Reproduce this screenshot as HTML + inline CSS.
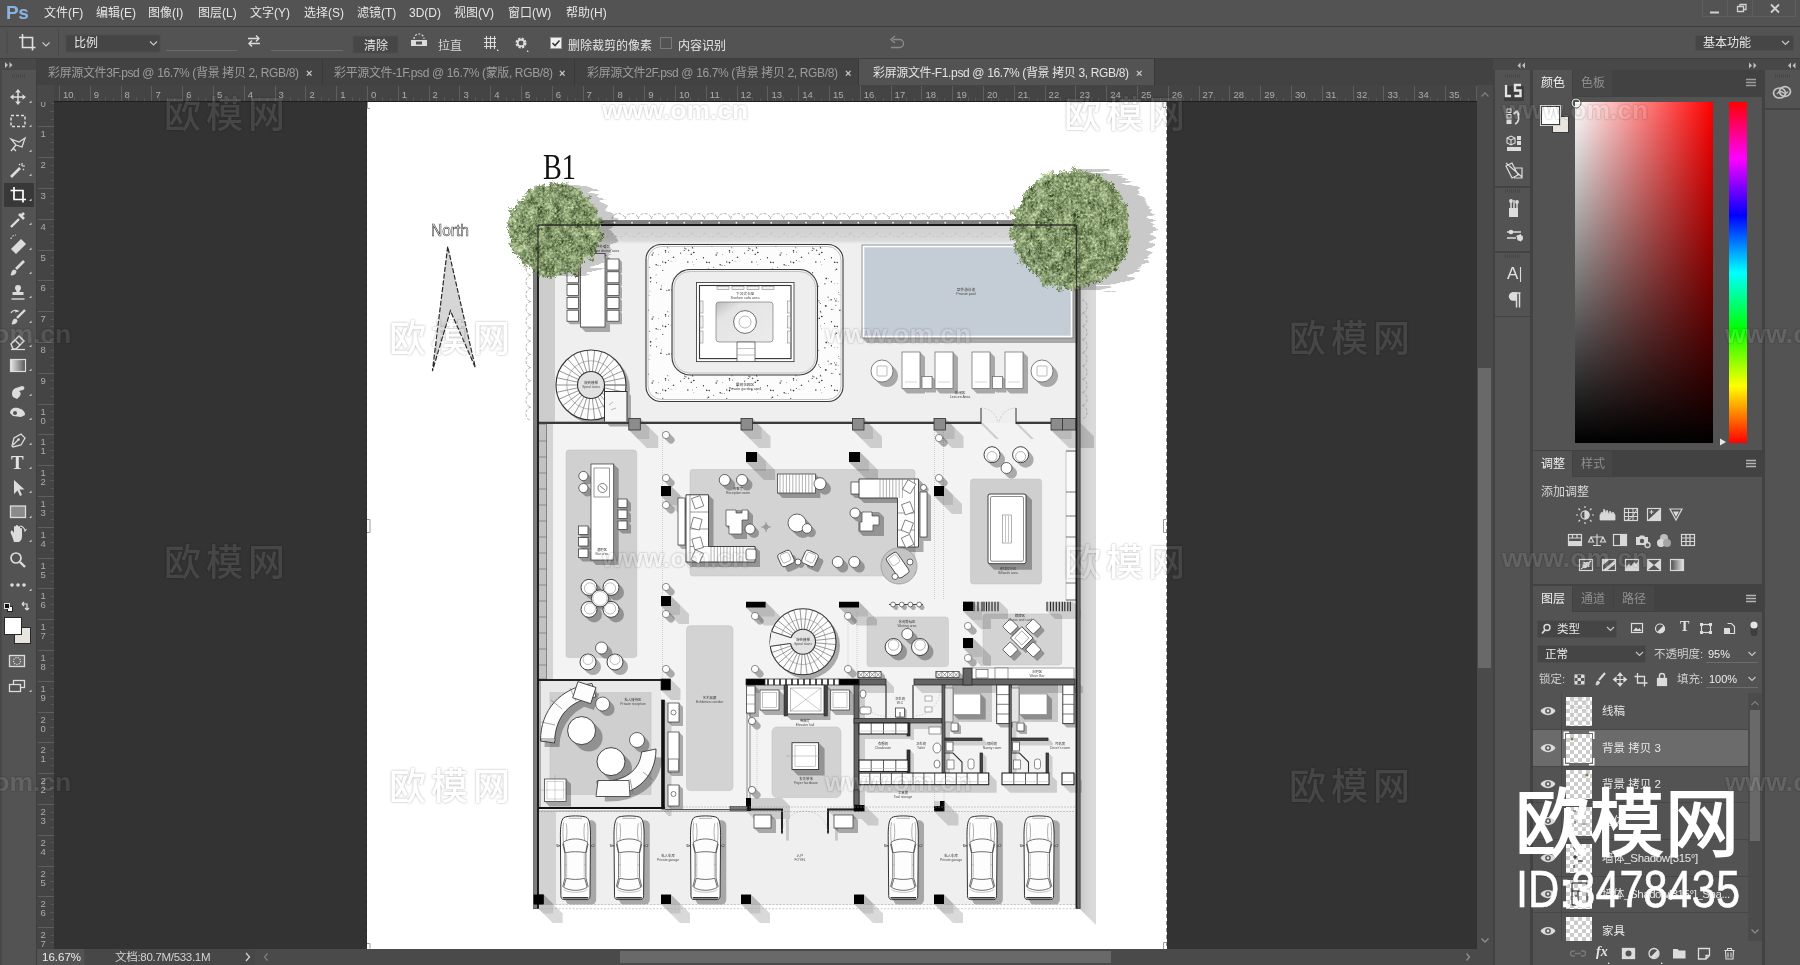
<!DOCTYPE html>
<html lang="zh-CN">
<head>
<meta charset="utf-8">
<title>Photoshop</title>
<style>
html,body{margin:0;padding:0;}
body{width:1800px;height:965px;overflow:hidden;background:#535353;position:relative;
 font-family:"Liberation Sans","Noto Sans CJK SC",sans-serif;font-size:12px;color:#dddddd;}
.a{position:absolute;}
.t{position:absolute;white-space:nowrap;line-height:16px;height:16px;}
svg{position:absolute;overflow:visible;}
.m{top:5px;font-size:12px;color:#e6e6e6;}
.tab{top:65px;font-size:12px;color:#9d9d9d;letter-spacing:-0.36px;}
.x{top:65px;font-size:11px;color:#c8c8c8;font-weight:bold;}
.dim{color:#8f8f8f;}
.wmk{font-weight:500;line-height:50px;height:50px;color:#fff;filter:url(#wmf);}
</style>
</head>
<body>
<div id="root" style="position:absolute;left:0;top:0;width:1800px;height:965px;will-change:transform">
<svg width="0" height="0" style="left:0;top:0"><defs><filter id="wmf" x="-5%" y="-20%" width="110%" height="140%" color-interpolation-filters="sRGB"><feGaussianBlur in="SourceAlpha" stdDeviation="1.300" result="b"/><feComposite in="b" in2="SourceAlpha" operator="out" result="halo"/><feColorMatrix in="halo" type="matrix" values="0 0 0 0 0  0 0 0 0 0  0 0 0 0 0  0 0 0 0.300 0" result="h2"/><feFlood flood-color="#ffffff" flood-opacity="0.095" result="fl"/><feComposite in="fl" in2="SourceAlpha" operator="in" result="f"/><feMerge><feMergeNode in="h2"/><feMergeNode in="f"/></feMerge></filter></defs></svg>
<div class="a" style="left:0;top:0;width:1800px;height:26px;background:#535353"></div>
<div class="a" style="left:0;top:26px;width:1800px;height:1px;background:#3f3f3f"></div>
<div class="a" style="left:0;top:27px;width:1800px;height:31px;background:#535353"></div>
<div class="t" style="left:6px;top:2px;font-size:19px;font-weight:bold;color:#8ab4e0;line-height:22px;height:22px;letter-spacing:-0.5px">Ps</div>
<div class="t m" style="left:44px">文件(F)</div>
<div class="t m" style="left:96px">编辑(E)</div>
<div class="t m" style="left:148px">图像(I)</div>
<div class="t m" style="left:198px">图层(L)</div>
<div class="t m" style="left:250px">文字(Y)</div>
<div class="t m" style="left:304px">选择(S)</div>
<div class="t m" style="left:357px">滤镜(T)</div>
<div class="t m" style="left:409px">3D(D)</div>
<div class="t m" style="left:454px">视图(V)</div>
<div class="t m" style="left:508px">窗口(W)</div>
<div class="t m" style="left:566px">帮助(H)</div>
<!-- window buttons -->
<div class="a" style="left:1702px;top:-1px;width:94px;height:18px;border:1px solid #5f5f5f;box-sizing:border-box"></div><div class="a" style="left:1727px;top:0;width:1px;height:16px;background:#5f5f5f"></div><div class="a" style="left:1752px;top:0;width:1px;height:16px;background:#5f5f5f"></div>
<svg style="left:1702px;top:0" width="95" height="17"><path d="M8 12.5h9" stroke="#d0d0d0" stroke-width="2" fill="none"/><path d="M35.5 6.5h6v5h-6z M38 6V4.5h6v5h-2" stroke="#d0d0d0" stroke-width="1.3" fill="none"/><path d="M69 4.5l8 8M77 4.5l-8 8" stroke="#d0d0d0" stroke-width="1.8" fill="none"/></svg>
<!-- options bar -->
<svg style="left:0;top:27px" width="900" height="31">
 <path d="M7 4v23" stroke="#484848" stroke-width="1"/>
 <path d="M22.5 7v13.5h13 M19 10.5h13.5v13" stroke="#e0e0e0" stroke-width="1.6" fill="none"/>
 <path d="M42.5 15.5l3.5 3.5 3.5-3.5" stroke="#c8c8c8" stroke-width="1.2" fill="none"/>
 <path d="M58.5 3v25" stroke="#474747" stroke-width="1"/>
 <rect x="66" y="8" width="94" height="17" fill="#454545" stroke="#4e4e4e" stroke-width="1"/>
 <path d="M150 14.5l3.5 3.5 3.5-3.5" stroke="#c8c8c8" stroke-width="1.2" fill="none"/>
 <path d="M166 23.5h71 M271 23.5h72" stroke="#6a6a6a" stroke-width="1"/>
 <path d="M248 12.5h11m-3-3l3 3-3 3 M260 17.5h-11m3-3l-3 3 3 3" stroke="#dcdcdc" stroke-width="1.4" fill="none" transform="translate(0,-1)"/>
 <rect x="353" y="9" width="45" height="17" fill="#464646" stroke="#4e4e4e"/>
 <path d="M411 13h16v6h-16z" fill="#dcdcdc"/><path d="M414 12a5 5 0 0 1 10 0" stroke="#dcdcdc" stroke-width="1.2" fill="none" stroke-dasharray="2 1.5"/><rect x="416" y="14.5" width="6" height="3" fill="#535353"/>
 <path d="M484 11.5h12M484 15.5h12M484 19.5h12M486.5 9v13M490.5 9v13M494.5 9v13" stroke="#dcdcdc" stroke-width="1.1" fill="none"/>
 <path d="M497 22l2 2-2 0z" fill="#dcdcdc"/>
 <circle cx="521" cy="16" r="4" fill="none" stroke="#dcdcdc" stroke-width="3" stroke-dasharray="2.1 1.05"/><circle cx="521" cy="16" r="3.3" fill="none" stroke="#dcdcdc" stroke-width="1.6"/>
 <path d="M527 23l2 2-2 0z" fill="#dcdcdc"/>
 <rect x="550.5" y="10.500" width="11" height="11" fill="#f0f0f0" stroke="#9a9a9a"/><path d="M552.500 16l2.500 2.500 4.500-5" stroke="#333" stroke-width="1.6" fill="none"/>
 <rect x="660.500" y="10.500" width="11" height="11" fill="none" stroke="#7a7a7a"/>
 <path d="M893 12.500h6.500a4 4 0 0 1 0 8h-8.500" stroke="#8a8a8a" stroke-width="1.400" fill="none"/><path d="M895 9l-4 3.500 4 3.500" stroke="#8a8a8a" stroke-width="1.400" fill="none"/>
</svg>
<div class="t" style="left:74px;top:35px;color:#e6e6e6">比例</div>
<div class="t" style="left:364px;top:38px;color:#e6e6e6">清除</div>
<div class="t" style="left:438px;top:38px;color:#d6d6d6">拉直</div>
<div class="t" style="left:568px;top:38px;color:#e6e6e6">删除裁剪的像素</div>
<div class="t" style="left:678px;top:38px;color:#e6e6e6">内容识别</div>
<div class="a" style="left:1695px;top:35px;width:99px;height:16px;background:#464646;border:1px solid #4e4e4e;box-sizing:border-box"></div>
<div class="t" style="left:1703px;top:35px;color:#e6e6e6">基本功能</div>
<svg style="left:1780px;top:38px" width="12" height="10"><path d="M2 3l3.500 3.500 3.500-3.500" stroke="#c8c8c8" stroke-width="1.200" fill="none"/></svg>
<!-- tab bar -->
<div class="a" style="left:0;top:58px;width:1800px;height:1px;background:#3f3f3f"></div>
<div class="a" style="left:0;top:59px;width:37px;height:11px;background:#484848"></div>
<svg style="left:4px;top:61px" width="12" height="8"><path d="M1 1l3 3-3 3zM5.500 1l3 3-3 3z" fill="#c0c0c0"/></svg>
<div class="a" style="left:37px;top:59px;width:1456px;height:26px;background:#424242"></div>
<div class="a" style="left:859px;top:59px;width:295px;height:26px;background:#535353"></div>
<div class="a" style="left:322px;top:59px;width:1px;height:26px;background:#393939"></div>
<div class="a" style="left:574px;top:59px;width:1px;height:26px;background:#393939"></div>
<div class="a" style="left:858px;top:59px;width:1px;height:26px;background:#393939"></div>
<div class="a" style="left:1154px;top:59px;width:1px;height:26px;background:#393939"></div>
<div class="t tab" style="left:48px">彩屏源文件3F.psd @ 16.7% (背景 拷贝 2, RGB/8)</div><div class="t x" style="left:306px">×</div>
<div class="t tab" style="left:334px">彩平源文件-1F.psd @ 16.7% (蒙版, RGB/8)</div><div class="t x" style="left:559px">×</div>
<div class="t tab" style="left:587px">彩屏源文件2F.psd @ 16.7% (背景 拷贝 2, RGB/8)</div><div class="t x" style="left:845px">×</div>
<div class="t tab" style="left:873px;color:#e4e4e4">彩屏源文件-F1.psd @ 16.7% (背景 拷贝 3, RGB/8)</div><div class="t x" style="left:1136px">×</div>

<svg class="a" style="left:37px;top:85px;overflow:hidden" width="1440" height="17" viewBox="37 85 1440 17">
<rect x="37" y="85" width="1440" height="17" fill="#444444"/>
<rect x="37" y="85" width="17" height="17" fill="#484848"/>
<path d="M59.5 86V101M90.5 86V101M121.5 86V101M151.5 86V101M182.5 86V101M213.5 86V101M244.5 86V101M275.5 86V101M305.5 86V101M336.5 86V101M367.5 86V101M398.5 86V101M429.5 86V101M459.5 86V101M490.5 86V101M521.5 86V101M552.5 86V101M583.5 86V101M613.5 86V101M644.5 86V101M675.5 86V101M706.5 86V101M737.5 86V101M767.5 86V101M798.5 86V101M829.5 86V101M860.5 86V101M891.5 86V101M921.5 86V101M952.5 86V101M983.5 86V101M1014.5 86V101M1045.5 86V101M1075.5 86V101M1106.5 86V101M1137.5 86V101M1168.5 86V101M1199.5 86V101M1229.5 86V101M1260.5 86V101M1291.5 86V101M1322.5 86V101M1353.5 86V101M1383.5 86V101M1414.5 86V101M1445.5 86V101M1476.5 86V101" stroke="#5e5e5e" stroke-width="1" fill="none"/>
<path d="M67.5 98V101M74.5 97V101M82.5 98V101M98.5 98V101M105.5 97V101M113.5 98V101M128.5 98V101M136.5 97V101M144.5 98V101M159.5 98V101M167.5 97V101M174.5 98V101M190.5 98V101M198.5 97V101M205.5 98V101M221.5 98V101M228.5 97V101M236.5 98V101M252.5 98V101M259.5 97V101M267.5 98V101M282.5 98V101M290.5 97V101M298.5 98V101M313.5 98V101M321.5 97V101M328.5 98V101M344.5 98V101M352.5 97V101M359.5 98V101M375.5 98V101M382.5 97V101M390.5 98V101M406.5 98V101M413.5 97V101M421.5 98V101M436.5 98V101M444.5 97V101M452.5 98V101M467.5 98V101M475.5 97V101M482.5 98V101M498.5 98V101M506.5 97V101M513.5 98V101M529.5 98V101M536.5 97V101M544.5 98V101M560.5 98V101M567.5 97V101M575.5 98V101M590.5 98V101M598.5 97V101M606.5 98V101M621.5 98V101M629.5 97V101M636.5 98V101M652.5 98V101M660.5 97V101M667.5 98V101M683.5 98V101M690.5 97V101M698.5 98V101M714.5 98V101M721.5 97V101M729.5 98V101M744.5 98V101M752.5 97V101M760.5 98V101M775.5 98V101M783.5 97V101M791.5 98V101M806.5 98V101M814.5 97V101M821.5 98V101M837.5 98V101M844.5 97V101M852.5 98V101M868.5 98V101M875.5 97V101M883.5 98V101M898.5 98V101M906.5 97V101M914.5 98V101M929.5 98V101M937.5 97V101M944.5 98V101M960.5 98V101M968.5 97V101M975.5 98V101M991.5 98V101M998.5 97V101M1006.5 98V101M1022.5 98V101M1029.5 97V101M1037.5 98V101M1052.5 98V101M1060.5 97V101M1068.5 98V101M1083.5 98V101M1091.5 97V101M1098.5 98V101M1114.5 98V101M1122.5 97V101M1129.5 98V101M1145.5 98V101M1152.5 97V101M1160.5 98V101M1176.5 98V101M1183.5 97V101M1191.5 98V101M1206.5 98V101M1214.5 97V101M1222.5 98V101M1237.5 98V101M1245.5 97V101M1252.5 98V101M1268.5 98V101M1276.5 97V101M1283.5 98V101M1299.5 98V101M1306.5 97V101M1314.5 98V101M1330.5 98V101M1337.5 97V101M1345.5 98V101M1360.5 98V101M1368.5 97V101M1376.5 98V101M1391.5 98V101M1399.5 97V101M1406.5 98V101M1422.5 98V101M1430.5 97V101M1437.5 98V101M1453.5 98V101M1460.5 97V101M1468.5 98V101" stroke="#565656" stroke-width="1" fill="none"/>
<text x="63.0" y="98" font-size="9.5" fill="#adadad" font-family="Liberation Sans, sans-serif">10</text>
<text x="93.8" y="98" font-size="9.5" fill="#adadad" font-family="Liberation Sans, sans-serif">9</text>
<text x="124.6" y="98" font-size="9.5" fill="#adadad" font-family="Liberation Sans, sans-serif">8</text>
<text x="155.4" y="98" font-size="9.5" fill="#adadad" font-family="Liberation Sans, sans-serif">7</text>
<text x="186.2" y="98" font-size="9.5" fill="#adadad" font-family="Liberation Sans, sans-serif">6</text>
<text x="217.0" y="98" font-size="9.5" fill="#adadad" font-family="Liberation Sans, sans-serif">5</text>
<text x="247.8" y="98" font-size="9.5" fill="#adadad" font-family="Liberation Sans, sans-serif">4</text>
<text x="278.6" y="98" font-size="9.5" fill="#adadad" font-family="Liberation Sans, sans-serif">3</text>
<text x="309.4" y="98" font-size="9.5" fill="#adadad" font-family="Liberation Sans, sans-serif">2</text>
<text x="340.2" y="98" font-size="9.5" fill="#adadad" font-family="Liberation Sans, sans-serif">1</text>
<text x="371.0" y="98" font-size="9.5" fill="#adadad" font-family="Liberation Sans, sans-serif">0</text>
<text x="401.8" y="98" font-size="9.5" fill="#adadad" font-family="Liberation Sans, sans-serif">1</text>
<text x="432.6" y="98" font-size="9.5" fill="#adadad" font-family="Liberation Sans, sans-serif">2</text>
<text x="463.4" y="98" font-size="9.5" fill="#adadad" font-family="Liberation Sans, sans-serif">3</text>
<text x="494.2" y="98" font-size="9.5" fill="#adadad" font-family="Liberation Sans, sans-serif">4</text>
<text x="525.0" y="98" font-size="9.5" fill="#adadad" font-family="Liberation Sans, sans-serif">5</text>
<text x="555.8" y="98" font-size="9.5" fill="#adadad" font-family="Liberation Sans, sans-serif">6</text>
<text x="586.6" y="98" font-size="9.5" fill="#adadad" font-family="Liberation Sans, sans-serif">7</text>
<text x="617.4" y="98" font-size="9.5" fill="#adadad" font-family="Liberation Sans, sans-serif">8</text>
<text x="648.2" y="98" font-size="9.5" fill="#adadad" font-family="Liberation Sans, sans-serif">9</text>
<text x="679.0" y="98" font-size="9.5" fill="#adadad" font-family="Liberation Sans, sans-serif">10</text>
<text x="709.8" y="98" font-size="9.5" fill="#adadad" font-family="Liberation Sans, sans-serif">11</text>
<text x="740.6" y="98" font-size="9.5" fill="#adadad" font-family="Liberation Sans, sans-serif">12</text>
<text x="771.4" y="98" font-size="9.5" fill="#adadad" font-family="Liberation Sans, sans-serif">13</text>
<text x="802.2" y="98" font-size="9.5" fill="#adadad" font-family="Liberation Sans, sans-serif">14</text>
<text x="833.0" y="98" font-size="9.5" fill="#adadad" font-family="Liberation Sans, sans-serif">15</text>
<text x="863.8" y="98" font-size="9.5" fill="#adadad" font-family="Liberation Sans, sans-serif">16</text>
<text x="894.6" y="98" font-size="9.5" fill="#adadad" font-family="Liberation Sans, sans-serif">17</text>
<text x="925.4" y="98" font-size="9.5" fill="#adadad" font-family="Liberation Sans, sans-serif">18</text>
<text x="956.2" y="98" font-size="9.5" fill="#adadad" font-family="Liberation Sans, sans-serif">19</text>
<text x="987.0" y="98" font-size="9.5" fill="#adadad" font-family="Liberation Sans, sans-serif">20</text>
<text x="1017.8" y="98" font-size="9.5" fill="#adadad" font-family="Liberation Sans, sans-serif">21</text>
<text x="1048.6" y="98" font-size="9.5" fill="#adadad" font-family="Liberation Sans, sans-serif">22</text>
<text x="1079.4" y="98" font-size="9.5" fill="#adadad" font-family="Liberation Sans, sans-serif">23</text>
<text x="1110.2" y="98" font-size="9.5" fill="#adadad" font-family="Liberation Sans, sans-serif">24</text>
<text x="1141.0" y="98" font-size="9.5" fill="#adadad" font-family="Liberation Sans, sans-serif">25</text>
<text x="1171.8" y="98" font-size="9.5" fill="#adadad" font-family="Liberation Sans, sans-serif">26</text>
<text x="1202.6" y="98" font-size="9.5" fill="#adadad" font-family="Liberation Sans, sans-serif">27</text>
<text x="1233.4" y="98" font-size="9.5" fill="#adadad" font-family="Liberation Sans, sans-serif">28</text>
<text x="1264.2" y="98" font-size="9.5" fill="#adadad" font-family="Liberation Sans, sans-serif">29</text>
<text x="1295.0" y="98" font-size="9.5" fill="#adadad" font-family="Liberation Sans, sans-serif">30</text>
<text x="1325.8" y="98" font-size="9.5" fill="#adadad" font-family="Liberation Sans, sans-serif">31</text>
<text x="1356.6" y="98" font-size="9.5" fill="#adadad" font-family="Liberation Sans, sans-serif">32</text>
<text x="1387.4" y="98" font-size="9.5" fill="#adadad" font-family="Liberation Sans, sans-serif">33</text>
<text x="1418.2" y="98" font-size="9.5" fill="#adadad" font-family="Liberation Sans, sans-serif">34</text>
<text x="1449.0" y="98" font-size="9.5" fill="#adadad" font-family="Liberation Sans, sans-serif">35</text>
</svg>
<svg class="a" style="left:37px;top:102px;overflow:hidden" width="17" height="847" viewBox="37 102 17 847">
<rect x="37" y="102" width="17" height="847" fill="#444444"/>
<path d="M38 126.5H54M38 157.5H54M38 188.5H54M38 219.5H54M38 250.5H54M38 280.5H54M38 311.5H54M38 342.5H54M38 373.5H54M38 404.5H54M38 434.5H54M38 465.5H54M38 496.5H54M38 527.5H54M38 558.5H54M38 588.5H54M38 619.5H54M38 650.5H54M38 681.5H54M38 712.5H54M38 742.5H54M38 773.5H54M38 804.5H54M38 835.5H54M38 866.5H54M38 896.5H54M38 927.5H54" stroke="#5e5e5e" stroke-width="1" fill="none"/>
<path d="M51 103.5H54M50 111.5H54M51 119.5H54M51 134.5H54M50 142.5H54M51 149.5H54M51 165.5H54M50 172.5H54M51 180.5H54M51 196.5H54M50 203.5H54M51 211.5H54M51 226.5H54M50 234.5H54M51 242.5H54M51 257.5H54M50 265.5H54M51 273.5H54M51 288.5H54M50 296.5H54M51 303.5H54M51 319.5H54M50 326.5H54M51 334.5H54M51 350.5H54M50 357.5H54M51 365.5H54M51 380.5H54M50 388.5H54M51 396.5H54M51 411.5H54M50 419.5H54M51 427.5H54M51 442.5H54M50 450.5H54M51 457.5H54M51 473.5H54M50 480.5H54M51 488.5H54M51 504.5H54M50 511.5H54M51 519.5H54M51 534.5H54M50 542.5H54M51 550.5H54M51 565.5H54M50 573.5H54M51 581.5H54M51 596.5H54M50 604.5H54M51 611.5H54M51 627.5H54M50 634.5H54M51 642.5H54M51 658.5H54M50 665.5H54M51 673.5H54M51 688.5H54M50 696.5H54M51 704.5H54M51 719.5H54M50 727.5H54M51 735.5H54M51 750.5H54M50 758.5H54M51 765.5H54M51 781.5H54M50 788.5H54M51 796.5H54M51 812.5H54M50 819.5H54M51 827.5H54M51 842.5H54M50 850.5H54M51 858.5H54M51 873.5H54M50 881.5H54M51 889.5H54M51 904.5H54M50 912.5H54M51 919.5H54M51 935.5H54M50 942.5H54" stroke="#565656" stroke-width="1" fill="none"/>
<text x="40.5" y="106.5" font-size="9.5" fill="#adadad" font-family="Liberation Sans, sans-serif">0</text>
<text x="40.5" y="137.3" font-size="9.5" fill="#adadad" font-family="Liberation Sans, sans-serif">1</text>
<text x="40.5" y="168.1" font-size="9.5" fill="#adadad" font-family="Liberation Sans, sans-serif">2</text>
<text x="40.5" y="198.9" font-size="9.5" fill="#adadad" font-family="Liberation Sans, sans-serif">3</text>
<text x="40.5" y="229.7" font-size="9.5" fill="#adadad" font-family="Liberation Sans, sans-serif">4</text>
<text x="40.5" y="260.5" font-size="9.5" fill="#adadad" font-family="Liberation Sans, sans-serif">5</text>
<text x="40.5" y="291.3" font-size="9.5" fill="#adadad" font-family="Liberation Sans, sans-serif">6</text>
<text x="40.5" y="322.1" font-size="9.5" fill="#adadad" font-family="Liberation Sans, sans-serif">7</text>
<text x="40.5" y="352.9" font-size="9.5" fill="#adadad" font-family="Liberation Sans, sans-serif">8</text>
<text x="40.5" y="383.7" font-size="9.5" fill="#adadad" font-family="Liberation Sans, sans-serif">9</text>
<text x="40.5" y="414.5" font-size="9.5" fill="#adadad" font-family="Liberation Sans, sans-serif">1</text>
<text x="40.5" y="423.5" font-size="9.5" fill="#adadad" font-family="Liberation Sans, sans-serif">0</text>
<text x="40.5" y="445.3" font-size="9.5" fill="#adadad" font-family="Liberation Sans, sans-serif">1</text>
<text x="40.5" y="454.3" font-size="9.5" fill="#adadad" font-family="Liberation Sans, sans-serif">1</text>
<text x="40.5" y="476.1" font-size="9.5" fill="#adadad" font-family="Liberation Sans, sans-serif">1</text>
<text x="40.5" y="485.1" font-size="9.5" fill="#adadad" font-family="Liberation Sans, sans-serif">2</text>
<text x="40.5" y="506.9" font-size="9.5" fill="#adadad" font-family="Liberation Sans, sans-serif">1</text>
<text x="40.5" y="515.9" font-size="9.5" fill="#adadad" font-family="Liberation Sans, sans-serif">3</text>
<text x="40.5" y="537.7" font-size="9.5" fill="#adadad" font-family="Liberation Sans, sans-serif">1</text>
<text x="40.5" y="546.7" font-size="9.5" fill="#adadad" font-family="Liberation Sans, sans-serif">4</text>
<text x="40.5" y="568.5" font-size="9.5" fill="#adadad" font-family="Liberation Sans, sans-serif">1</text>
<text x="40.5" y="577.5" font-size="9.5" fill="#adadad" font-family="Liberation Sans, sans-serif">5</text>
<text x="40.5" y="599.3" font-size="9.5" fill="#adadad" font-family="Liberation Sans, sans-serif">1</text>
<text x="40.5" y="608.3" font-size="9.5" fill="#adadad" font-family="Liberation Sans, sans-serif">6</text>
<text x="40.5" y="630.1" font-size="9.5" fill="#adadad" font-family="Liberation Sans, sans-serif">1</text>
<text x="40.5" y="639.1" font-size="9.5" fill="#adadad" font-family="Liberation Sans, sans-serif">7</text>
<text x="40.5" y="660.9" font-size="9.5" fill="#adadad" font-family="Liberation Sans, sans-serif">1</text>
<text x="40.5" y="669.9" font-size="9.5" fill="#adadad" font-family="Liberation Sans, sans-serif">8</text>
<text x="40.5" y="691.7" font-size="9.5" fill="#adadad" font-family="Liberation Sans, sans-serif">1</text>
<text x="40.5" y="700.7" font-size="9.5" fill="#adadad" font-family="Liberation Sans, sans-serif">9</text>
<text x="40.5" y="722.5" font-size="9.5" fill="#adadad" font-family="Liberation Sans, sans-serif">2</text>
<text x="40.5" y="731.5" font-size="9.5" fill="#adadad" font-family="Liberation Sans, sans-serif">0</text>
<text x="40.5" y="753.3" font-size="9.5" fill="#adadad" font-family="Liberation Sans, sans-serif">2</text>
<text x="40.5" y="762.3" font-size="9.5" fill="#adadad" font-family="Liberation Sans, sans-serif">1</text>
<text x="40.5" y="784.1" font-size="9.5" fill="#adadad" font-family="Liberation Sans, sans-serif">2</text>
<text x="40.5" y="793.1" font-size="9.5" fill="#adadad" font-family="Liberation Sans, sans-serif">2</text>
<text x="40.5" y="814.9" font-size="9.5" fill="#adadad" font-family="Liberation Sans, sans-serif">2</text>
<text x="40.5" y="823.9" font-size="9.5" fill="#adadad" font-family="Liberation Sans, sans-serif">3</text>
<text x="40.5" y="845.7" font-size="9.5" fill="#adadad" font-family="Liberation Sans, sans-serif">2</text>
<text x="40.5" y="854.7" font-size="9.5" fill="#adadad" font-family="Liberation Sans, sans-serif">4</text>
<text x="40.5" y="876.5" font-size="9.5" fill="#adadad" font-family="Liberation Sans, sans-serif">2</text>
<text x="40.5" y="885.5" font-size="9.5" fill="#adadad" font-family="Liberation Sans, sans-serif">5</text>
<text x="40.5" y="907.3" font-size="9.5" fill="#adadad" font-family="Liberation Sans, sans-serif">2</text>
<text x="40.5" y="916.3" font-size="9.5" fill="#adadad" font-family="Liberation Sans, sans-serif">6</text>
<text x="40.5" y="938.1" font-size="9.5" fill="#adadad" font-family="Liberation Sans, sans-serif">2</text>
<text x="40.5" y="947.1" font-size="9.5" fill="#adadad" font-family="Liberation Sans, sans-serif">7</text>
</svg>
<div class="a" style="left:0;top:70px;width:37px;height:895px;background:#535353"></div>
<div class="a" style="left:36px;top:59px;width:1px;height:906px;background:#3f3f3f"></div>
<div class="a" style="left:0;top:59px;width:2px;height:906px;background:#484848"></div>
<div class="a" style="left:4px;top:183px;width:30px;height:24px;background:#383838"></div>
<svg style="left:0;top:70px" width="37" height="640" viewBox="0 70 37 640" fill="none" stroke="#dcdcdc" stroke-width="1.5">
 <path d="M12 76h14" stroke="#474747" stroke-width="3" stroke-dasharray="1 1"/>
 <!-- move -->
 <path d="M18 91v12M12 97h12" stroke-width="1.500"/><path d="M18 89l-2.800 3.500h5.600zM18 105l-2.800-3.500h5.600zM10 97l3.500-2.800v5.600zM26 97l-3.500-2.800v5.600z" fill="#dcdcdc" stroke="none"/>
 <!-- marquee -->
 <rect x="11" y="115.500" width="14" height="11" stroke-dasharray="3 2"/>
 <!-- lasso -->
 <path d="M11 139l8 3 6-4-3 9-6-2zM16 145l-5 6M13 148l3 3" stroke-width="1.300"/>
 <!-- wand -->
 <path d="M11 177l9-9" stroke-width="2.600"/><path d="M22 163v3M25 166h-3M23 169l1 1M19 164l1 1" stroke-width="1.200"/>
 <!-- crop -->
 <path d="M14 187v12.500h12M10.500 190.500h12.500v12" stroke="#ffffff" stroke-width="1.700"/>
 <!-- eyedropper -->
 <path d="M11 227l8-8" stroke-width="2.400"/><path d="M19 214l5 5M21 216l3-3" stroke-width="2.600"/>
 <!-- heal -->
 <path d="M12 249l9-9 4 4-9 9z" fill="#dcdcdc"/><path d="M11 239a5 5 0 0 1 5-4" stroke-dasharray="1.500 1.500" stroke-width="1.200"/>
 <!-- brush -->
 <path d="M24 261l-8 8" stroke-width="2.600"/><path d="M11 275c3 0 5-1 5-4l-2-1c-2 0-2 3-3 5z" fill="#dcdcdc" stroke-width="1"/>
 <!-- stamp -->
 <path d="M18 285a3 3 0 0 1 3 3c0 2-1.500 2-1.500 4h4v3h-11v-3h4c0-2-1.500-2-1.500-4a3 3 0 0 1 3-3z" fill="#dcdcdc" stroke="none"/><path d="M11.500 299h13" stroke-width="1.400"/>
 <!-- history brush -->
 <path d="M25 310l-8 8" stroke-width="2.400"/><path d="M12 324c3 0 5-1 5-4l-2-1c-2 0-2 3-3 5z" fill="#dcdcdc" stroke-width="1"/><path d="M11 313a5 5 0 0 1 7-2l-3 1" stroke-width="1.200"/>
 <!-- eraser -->
 <path d="M11 344l8-8 5 5-8 8h-3z" /><path d="M15 340l5 5" /><path d="M11 349.500h14" stroke-width="1.200"/>
 <!-- gradient -->
 <rect x="10.500" y="359.500" width="15" height="12" fill="url(#tg)" stroke-width="1.200"/>
 <defs><linearGradient id="tg" x1="0" x2="1"><stop offset="0" stop-color="#e8e8e8"/><stop offset="1" stop-color="#555"/></linearGradient></defs>
 <!-- smudge -->
 <path d="M13 397c-2-3-1-8 3-9l6-2c3 0 3 3 1 4l-4 1c2 1 2 3 1 5l-3 3z" fill="#dcdcdc" stroke="none"/>
 <!-- sponge/dodge -->
 <path d="M10 413c0-4 4-6 8-5s7 3 7 7l-4 2-8-1z" fill="#dcdcdc" stroke="none"/><circle cx="15" cy="413" r="2" fill="#535353" stroke="none"/>
 <!-- pen -->
 <path d="M12 446l2-8 7-4 4 4-4 7-8 2zM13 445l5-5" stroke-width="1.300"/><circle cx="18.500" cy="439.500" r="1.300" fill="#dcdcdc" stroke="none"/>
 <!-- rect shape -->
 <rect x="10.500" y="506" width="15" height="11.500" fill="#8a8a8a" stroke-width="1.300"/>
 <!-- arrow -->
 <path d="M14 480v14l3.500-3.500 2.500 5.500 2-1-2.500-5.500h5z" fill="#dcdcdc" stroke="none"/>
 <!-- hand -->
 <path d="M12 536c-1-2-2-4-1-5s2 0 3 2v-6c0-1.500 2-1.500 2 0v-1c0-1.500 2-1.500 2 0v1c0-1.500 2-1.500 2 0v2c0-1.500 2-1.500 2 0v7c0 3-1 5-3 6h-5z" fill="#dcdcdc" stroke="none"/><path d="M20 526a6 6 0 0 1 5 5l1.500-2" stroke-width="1.100"/>
 <!-- zoom -->
 <circle cx="16" cy="558" r="5" stroke-width="1.700"/><path d="M20 562l5 5" stroke-width="2.400"/>
 <!-- dots -->
 <circle cx="12" cy="585" r="1.800" fill="#dcdcdc" stroke="none"/><circle cx="18" cy="585" r="1.800" fill="#dcdcdc" stroke="none"/><circle cx="24" cy="585" r="1.800" fill="#dcdcdc" stroke="none"/>
 <!-- default colours / swap -->
 <rect x="7.500" y="606.500" width="5" height="5" fill="#ffffff" stroke="#222" stroke-width="1"/><rect x="4.500" y="603.500" width="5" height="5" fill="#111" stroke="#ddd" stroke-width="1"/>
 <path d="M22 604h5v6M22 604l2-2M22 604l2 2M27 610l-2-2M27 610l2-2" stroke-width="1.200"/>
 <!-- quick mask -->
 <rect x="9.500" y="655.500" width="15" height="11" stroke-width="1.300" fill="#6a6a6a"/><circle cx="17" cy="661" r="3.500" stroke-dasharray="1.200 1.200" stroke-width="1.200"/>
 <!-- screen mode -->
 <rect x="13.500" y="680.500" width="11" height="7" stroke-width="1.300"/><rect x="9.500" y="684.500" width="11" height="7" fill="#535353" stroke-width="1.300"/>
</svg>
<svg style="left:0;top:70px" width="37" height="640" viewBox="0 70 37 640"><path d="M29 103l2.500-2.500V103zM29 127l2.500-2.500V127zM29 152l2.500-2.500V152zM29 176l2.500-2.500V176zM29 201l2.500-2.500V201zM29 225l2.500-2.500V225zM29 250l2.500-2.500V250zM29 274l2.500-2.500V274zM29 298l2.500-2.500V298zM29 323l2.500-2.500V323zM29 347l2.500-2.500V347zM29 371l2.500-2.500V371zM29 396l2.500-2.500V396zM29 420l2.500-2.500V420zM29 445l2.500-2.500V445zM29 469l2.500-2.500V469zM29 493l2.500-2.500V493zM29 518l2.500-2.500V518zM29 542l2.500-2.500V542zM29 591l2.500-2.500V591zM29 692l2.500-2.500V692z" fill="#c8c8c8"/></svg>
<div class="t" style="left:11px;top:452px;font-family:'Liberation Serif',serif;font-weight:bold;font-size:19px;line-height:22px;height:22px;color:#e2e2e2">T</div>
<div class="a" style="left:14px;top:627px;width:17px;height:17px;background:#e8e4e0;border:1px solid #2a2a2a;box-sizing:border-box"></div>
<div class="a" style="left:4px;top:617px;width:18px;height:18px;background:#ffffff;border:1px solid #2a2a2a;box-sizing:border-box"></div>

<div class="a" style="left:54px;top:102px;width:1423px;height:847px;background:#333333"></div>
<div class="a" style="left:54px;top:101px;width:1423px;height:1px;background:#1e1e1e"></div>
<div class="a" style="left:367px;top:102px;width:799.500px;height:847px;background:#ffffff"></div>
<svg class="a" style="left:0;top:0" width="1800" height="965" viewBox="0 0 1800 965">
<defs><clipPath id="docclip"><rect x="367" y="102" width="800" height="847"/></clipPath><linearGradient id="tb" x1="0" x2="0" y1="0" y2="1"><stop offset="0" stop-color="#cdcdcd"/><stop offset=".8" stop-color="#dadada"/><stop offset="1" stop-color="#efefef"/></linearGradient><linearGradient id="rb" x1="0" x2="1" y1="0" y2="0"><stop offset="0" stop-color="#bdbdbd" stop-opacity=".7"/><stop offset="1" stop-color="#ddd" stop-opacity="0"/></linearGradient><pattern id="spk" width="64" height="64" patternUnits="userSpaceOnUse"><rect width="64" height="64" fill="#fcfcfc"/><circle cx="20.7" cy="9.7" r="0.4" fill="#222"/><circle cx="52.6" cy="6" r="0.4" fill="#444"/><circle cx="2.4" cy="27.8" r="0.4" fill="#444"/><circle cx="5.8" cy="27.2" r="0.4" fill="#444"/><circle cx="40.4" cy="37.3" r="0.4" fill="#333"/><circle cx="3.2" cy="14.1" r="0.5" fill="#666"/><circle cx="26.8" cy="34.6" r="0.6" fill="#444"/><circle cx="6.6" cy="36.6" r="0.5" fill="#666"/><circle cx="6.2" cy="45.6" r="0.4" fill="#444"/><circle cx="31.8" cy="34" r="0.6" fill="#333"/><circle cx="37.5" cy="29" r="0.6" fill="#444"/><circle cx="50.8" cy="44.7" r="0.5" fill="#222"/><circle cx="36.8" cy="33.6" r="0.6" fill="#333"/><circle cx="18.4" cy="62.7" r="0.4" fill="#333"/><circle cx="10.6" cy="21.9" r="0.8" fill="#333"/><circle cx="2.5" cy="42.8" r="0.6" fill="#666"/><circle cx="44.5" cy="38" r="0.8" fill="#222"/><circle cx="53.8" cy="60.5" r="0.8" fill="#222"/><circle cx="3.9" cy="44.9" r="0.8" fill="#666"/><circle cx="45.9" cy="56.8" r="0.6" fill="#222"/><circle cx="60.2" cy="22.7" r="0.4" fill="#333"/><circle cx="3.8" cy="49.2" r="0.5" fill="#444"/><circle cx="25.5" cy="58.7" r="0.8" fill="#222"/><circle cx="10.6" cy="25.7" r="0.6" fill="#444"/><circle cx="52.4" cy="55.3" r="0.6" fill="#333"/><circle cx="63.1" cy="43.7" r="0.8" fill="#444"/><circle cx="9.7" cy="11.3" r="0.5" fill="#444"/><circle cx="0.8" cy="53.2" r="0.5" fill="#666"/><circle cx="18" cy="9.3" r="0.6" fill="#666"/><circle cx="61" cy="44.2" r="0.4" fill="#333"/><circle cx="57.6" cy="49.9" r="0.8" fill="#333"/><circle cx="25.5" cy="6.6" r="0.8" fill="#222"/><circle cx="12.2" cy="63" r="0.8" fill="#444"/><circle cx="7" cy="38.4" r="0.4" fill="#222"/><circle cx="36.3" cy="34.3" r="0.6" fill="#222"/><circle cx="4.5" cy="13.3" r="0.8" fill="#444"/><circle cx="40.6" cy="61.1" r="0.6" fill="#333"/><circle cx="7.9" cy="54.3" r="0.8" fill="#333"/><circle cx="31" cy="5.5" r="0.4" fill="#666"/><circle cx="47.4" cy="30.6" r="0.5" fill="#222"/><circle cx="13.1" cy="60.9" r="0.6" fill="#444"/><circle cx="44.2" cy="58.5" r="0.6" fill="#222"/><circle cx="44.6" cy="16.7" r="0.6" fill="#444"/><circle cx="22.8" cy="14.3" r="0.6" fill="#444"/><circle cx="39.2" cy="50.5" r="0.5" fill="#444"/><circle cx="52.4" cy="47.4" r="0.5" fill="#444"/><circle cx="33.1" cy="22.8" r="0.4" fill="#222"/><circle cx="50.6" cy="30.2" r="0.5" fill="#666"/><circle cx="28.6" cy="60" r="0.6" fill="#666"/><circle cx="5.2" cy="6.5" r="0.8" fill="#444"/><circle cx="21.6" cy="30.9" r="0.4" fill="#333"/><circle cx="58.2" cy="22" r="0.4" fill="#222"/><circle cx="58.2" cy="50.1" r="0.5" fill="#333"/><circle cx="56.9" cy="27.8" r="0.6" fill="#222"/><circle cx="51.3" cy="62.2" r="0.8" fill="#333"/><circle cx="25.7" cy="60.6" r="0.5" fill="#444"/><circle cx="63.6" cy="1.8" r="0.8" fill="#444"/><circle cx="39.1" cy="38.1" r="0.8" fill="#666"/><circle cx="10" cy="35.1" r="0.4" fill="#222"/><circle cx="51.2" cy="46.5" r="0.4" fill="#444"/><circle cx="27.8" cy="55.8" r="0.5" fill="#222"/><circle cx="16.1" cy="18.7" r="0.5" fill="#666"/><circle cx="16.6" cy="26.8" r="0.5" fill="#222"/><circle cx="58.2" cy="22.6" r="0.8" fill="#333"/><circle cx="52.9" cy="56.2" r="0.5" fill="#444"/><circle cx="33.5" cy="1.2" r="0.8" fill="#444"/><circle cx="38.9" cy="49.7" r="0.5" fill="#444"/><circle cx="9.1" cy="39.6" r="0.4" fill="#222"/><circle cx="20.9" cy="33.2" r="0.8" fill="#222"/><circle cx="56.5" cy="3.6" r="0.5" fill="#666"/><circle cx="2.7" cy="6.3" r="0.8" fill="#222"/><circle cx="48.6" cy="58.4" r="0.8" fill="#666"/><circle cx="39.2" cy="32.4" r="0.5" fill="#666"/><circle cx="29" cy="34.1" r="0.8" fill="#444"/><circle cx="44.7" cy="56.1" r="0.6" fill="#444"/><circle cx="53.8" cy="8.8" r="0.4" fill="#333"/><circle cx="28.3" cy="4.6" r="0.5" fill="#333"/><circle cx="4.7" cy="42.8" r="0.4" fill="#444"/><circle cx="60.1" cy="41.2" r="0.6" fill="#444"/><circle cx="16.2" cy="8.8" r="0.8" fill="#444"/><circle cx="47.8" cy="6" r="0.8" fill="#444"/><circle cx="63.4" cy="53.3" r="0.5" fill="#333"/><circle cx="63.6" cy="25.8" r="0.8" fill="#444"/><circle cx="22.8" cy="5.9" r="0.6" fill="#222"/><circle cx="21.6" cy="29.4" r="0.4" fill="#333"/></pattern><linearGradient id="sunk" x1="0" y1="0" x2="1" y2="1"><stop offset="0" stop-color="#bdbdbd"/><stop offset=".25" stop-color="#e4e4e4"/><stop offset="1" stop-color="#ececec"/></linearGradient><filter id="leaf" x="-20%" y="-20%" width="140%" height="140%" color-interpolation-filters="sRGB"><feTurbulence type="fractalNoise" baseFrequency="0.42" numOctaves="3" seed="4" result="n"/><feTurbulence type="fractalNoise" baseFrequency="0.11" numOctaves="2" seed="9" result="n2"/><feDisplacementMap in="SourceGraphic" in2="n2" scale="16" xChannelSelector="R" yChannelSelector="G" result="d0"/><feDisplacementMap in="d0" in2="n" scale="7" xChannelSelector="G" yChannelSelector="R" result="d"/><feComposite in="n" in2="n2" operator="arithmetic" k1="0" k2="0.7" k3="0.55" k4="-0.12" result="m"/><feColorMatrix in="m" type="matrix" values="1.05 0 0 0 0.09  1.05 0 0 0 0.18  0.95 0 0 0 0.02  0 0 0 0 1" result="c"/><feComposite in="c" in2="d" operator="in"/></filter><filter id="tsh" x="-30%" y="-20%" width="160%" height="140%"><feTurbulence type="fractalNoise" baseFrequency="0.02 0.25" numOctaves="2" seed="3" result="n"/><feDisplacementMap in="SourceGraphic" in2="n" scale="22" xChannelSelector="R" yChannelSelector="G"/></filter></defs>
<g clip-path="url(#docclip)">
<g><rect x="538" y="225" width="538" height="198" fill="#efefef"/><rect x="538" y="423" width="538" height="388" fill="#f3f3f3"/><rect x="538" y="811" width="538" height="94" fill="#efefef"/><rect x="538" y="226" width="538" height="18" fill="url(#tb)"/><rect x="538" y="226" width="17" height="197" fill="#cdcdcd"/><rect x="546" y="424" width="7" height="255" fill="#d4d4d4"/><rect x="538" y="812" width="18" height="93" fill="#d2d2d2"/><path d="M1080 232L1096 248L1096 925L1080 909z" fill="#dadada"/><path d="M1080 232L1096 248L1096 925L1080 909z" fill="url(#rb)"/><path d="M612 219a6.5 5.5 0 0 1 13 0M625.2 219a6.5 5.5 0 0 1 13 0M638.4 219a6.5 5.5 0 0 1 13 0M651.6 219a6.5 5.5 0 0 1 13 0M664.8 219a6.5 5.5 0 0 1 13 0M678 219a6.5 5.5 0 0 1 13 0M691.2 219a6.5 5.5 0 0 1 13 0M704.4 219a6.5 5.5 0 0 1 13 0M717.6 219a6.5 5.5 0 0 1 13 0M730.8 219a6.5 5.5 0 0 1 13 0M744 219a6.5 5.5 0 0 1 13 0M757.2 219a6.5 5.5 0 0 1 13 0M770.4 219a6.5 5.5 0 0 1 13 0M783.6 219a6.5 5.5 0 0 1 13 0M796.8 219a6.5 5.5 0 0 1 13 0M810 219a6.5 5.5 0 0 1 13 0M823.2 219a6.5 5.5 0 0 1 13 0M836.4 219a6.5 5.5 0 0 1 13 0M849.6 219a6.5 5.5 0 0 1 13 0M862.8 219a6.5 5.5 0 0 1 13 0M876 219a6.5 5.5 0 0 1 13 0M889.2 219a6.5 5.5 0 0 1 13 0M902.4 219a6.5 5.5 0 0 1 13 0M915.6 219a6.5 5.5 0 0 1 13 0M928.8 219a6.5 5.5 0 0 1 13 0M942 219a6.5 5.5 0 0 1 13 0M955.2 219a6.5 5.5 0 0 1 13 0M968.4 219a6.5 5.5 0 0 1 13 0M981.6 219a6.5 5.5 0 0 1 13 0M994.8 219a6.5 5.5 0 0 1 13 0M1008 219a6.5 5.5 0 0 1 13 0M1021.2 219a6.5 5.5 0 0 1 13 0M1034.4 219a6.5 5.5 0 0 1 13 0M1047.6 219a6.5 5.5 0 0 1 13 0M1060.8 219a6.5 5.5 0 0 1 13 0M1074 219a6.5 5.5 0 0 1 13 0M531 262a5 6.5 0 0 0 0 13M531 275.2a5 6.5 0 0 0 0 13M531 288.4a5 6.5 0 0 0 0 13M531 301.6a5 6.5 0 0 0 0 13M531 314.8a5 6.5 0 0 0 0 13M531 328a5 6.5 0 0 0 0 13M531 341.2a5 6.5 0 0 0 0 13M531 354.4a5 6.5 0 0 0 0 13M531 367.6a5 6.5 0 0 0 0 13M531 380.8a5 6.5 0 0 0 0 13M531 394a5 6.5 0 0 0 0 13M531 407.2a5 6.5 0 0 0 0 13M1082 300a5 6.5 0 0 1 0 13M1082 313.2a5 6.5 0 0 1 0 13M1082 326.4a5 6.5 0 0 1 0 13M1082 339.6a5 6.5 0 0 1 0 13M1082 352.8a5 6.5 0 0 1 0 13M1082 366a5 6.5 0 0 1 0 13M1082 379.2a5 6.5 0 0 1 0 13M1082 392.4a5 6.5 0 0 1 0 13M1082 405.6a5 6.5 0 0 1 0 13" fill="none" stroke="#a0a0a0" stroke-width="0.8" stroke-dasharray="3 1.5"/><path d="M560 232a6.5 5 0 0 0 13 0M573.2 232a6.5 5 0 0 0 13 0M586.4 232a6.5 5 0 0 0 13 0M599.6 232a6.5 5 0 0 0 13 0M612.8 232a6.5 5 0 0 0 13 0M626 232a6.5 5 0 0 0 13 0M639.2 232a6.5 5 0 0 0 13 0M652.4 232a6.5 5 0 0 0 13 0M665.6 232a6.5 5 0 0 0 13 0M678.8 232a6.5 5 0 0 0 13 0M692 232a6.5 5 0 0 0 13 0M705.2 232a6.5 5 0 0 0 13 0M718.4 232a6.5 5 0 0 0 13 0M731.6 232a6.5 5 0 0 0 13 0M744.8 232a6.5 5 0 0 0 13 0M758 232a6.5 5 0 0 0 13 0M771.2 232a6.5 5 0 0 0 13 0M784.4 232a6.5 5 0 0 0 13 0M797.6 232a6.5 5 0 0 0 13 0M810.8 232a6.5 5 0 0 0 13 0M824 232a6.5 5 0 0 0 13 0M837.2 232a6.5 5 0 0 0 13 0M850.4 232a6.5 5 0 0 0 13 0M863.6 232a6.5 5 0 0 0 13 0M876.8 232a6.5 5 0 0 0 13 0M890 232a6.5 5 0 0 0 13 0M903.2 232a6.5 5 0 0 0 13 0M916.4 232a6.5 5 0 0 0 13 0M929.6 232a6.5 5 0 0 0 13 0M942.8 232a6.5 5 0 0 0 13 0M956 232a6.5 5 0 0 0 13 0M969.2 232a6.5 5 0 0 0 13 0M982.4 232a6.5 5 0 0 0 13 0M995.6 232a6.5 5 0 0 0 13 0M1008.8 232a6.5 5 0 0 0 13 0M1022 232a6.5 5 0 0 0 13 0M1035.2 232a6.5 5 0 0 0 13 0M1048.4 232a6.5 5 0 0 0 13 0M1061.6 232a6.5 5 0 0 0 13 0" fill="none" stroke="#bdbdbd" stroke-width="0.6" stroke-dasharray="3 1.5"/></g>
<g><rect x="566" y="450" width="70.7" height="207.6" fill="#d0d0d0" stroke="#bdbdbd" stroke-width="0.5" rx="3"/><rect x="690" y="469.5" width="225" height="106.5" fill="#d3d3d3" stroke="#bdbdbd" stroke-width="0.5" rx="3"/><rect x="970.5" y="479" width="71.1" height="105" fill="#cfcfcf" stroke="#bdbdbd" stroke-width="0.5" rx="3"/><rect x="686.5" y="625.7" width="46.5" height="164.9" fill="#d3d3d3" stroke="#bdbdbd" stroke-width="0.5" rx="4"/><rect x="867" y="617" width="81.4" height="49.6" fill="#d3d3d3" stroke="#bdbdbd" stroke-width="0.5" rx="3"/><rect x="983" y="614" width="78.7" height="51" fill="#d3d3d3" stroke="#bdbdbd" stroke-width="0.5" rx="3"/><rect x="772" y="727" width="69" height="70.5" fill="#d2d2d2" stroke="#bdbdbd" stroke-width="0.5" rx="5"/><rect x="539" y="681" width="122" height="126" fill="#e9e9e9"/><rect x="550" y="692.7" width="101" height="101.6" fill="#cfcfcf" stroke="#bbb" stroke-width="0.5"/><rect x="952" y="685" width="40" height="37" fill="#c9c9c9"/><rect x="1018" y="685" width="40" height="37" fill="#c9c9c9"/><path d="M662.500 430V680M934.500 430V600M943.500 430V600M857 612V680M848 612V680" stroke="#aaa" stroke-width="0.5" stroke-dasharray="1 1" fill="none"/></g>
<g fill="#000" opacity=".15"><path d="M628.8 418.5L640.3 418.5L658.3 436.5L658.3 448L646.8 448L628.8 430z"/><path d="M741 418.5L752.5 418.5L770.5 436.5L770.5 448L759 448L741 430z"/><path d="M852.5 418.5L864 418.5L882 436.5L882 448L870.5 448L852.5 430z"/><path d="M934 418.5L945.5 418.5L963.5 436.5L963.5 448L952 448L934 430z"/><path d="M1051 418.5L1062.5 418.5L1080.5 436.5L1080.5 448L1069 448L1051 430z"/><path d="M1062.5 418.5L1076 418.5L1094 436.5L1094 448L1080.5 448L1062.5 430z"/><path d="M980 423h3l16 16h-3zM1015 423h3l16 16h-3z"/><path d="M746 452L757 452L775 470L775 480L764 480L746 462z"/><path d="M849 452L860 452L878 470L878 480L867 480L849 462z"/><path d="M661 486L671 486L689 504L689 514L679 514L661 496z"/><path d="M934 486L944 486L962 504L962 514L952 514L934 496z"/><path d="M661 596L671 596L689 614L689 624L679 624L661 606z"/><path d="M963 601.7L973 601.7L991 619.7L991 629L981 629L963 611z"/><path d="M963 638L973 638L991 656L991 666L981 666L963 648z"/><path d="M746 601.8L765.6 601.8L783.6 619.8L783.6 625.5L764 625.5L746 607.5z"/><path d="M839 601.8L859 601.8L877 619.8L877 625.5L857 625.5L839 607.5z"/><path d="M974 601.7L1000 601.7L1008 609.7L1008 619L982 619L974 611z"/><path d="M1047 601.7L1073 601.7L1081 609.7L1081 619L1055 619L1047 611z"/><path d="M914 679L1075 679L1083 687L1083 693L922 693L914 685z"/><path d="M859 679L886 679L894 687L894 693L867 693L859 685z"/><path d="M963 668L972 668L980 676L980 693L971 693L963 685z"/><path d="M746 679L765 679L773 687L773 693L754 693L746 685z"/><path d="M839 679L859 679L867 687L867 693L847 693L839 685z"/><path d="M765 679L839 679L844 684L844 690L770 690L765 685z"/><path d="M854 685L859 685L865 691L865 817L860 817L854 811z"/><path d="M746 798h36v35.500h-3V811h-33zM828 808h32v3h-29v22.500h-3z" transform="translate(7 7)"/><path d="M746 798L782 798L790 806L790 819L754 819L746 811z"/><path d="M828 808L860 808L868 816L868 819L836 819L828 811z"/><path d="M661 679L670.5 679L680.5 689L680.5 700L671 700L661 690z"/><path d="M661.5 700L664.5 700L671.5 707L671.5 816L668.5 816L661.5 809z"/><path d="M854 718.6L942 718.6L948 724.6L948 729L860 729L854 723z"/><path d="M942 685L945 685L950 690L950 777.7L947 777.7L942 772.7z"/><path d="M1009 685L1011.5 685L1016.5 690L1016.5 777.7L1014 777.7L1009 772.7z"/><path d="M907 723L910 723L914 727L914 740L911 740L907 736z"/><path d="M907 750L910 750L914 754L914 776.7L911 776.7L907 772.7z"/><path d="M945 738L982 738L987 743L987 745.5L950 745.5L945 740.5z"/><path d="M1011.5 738L1048 738L1053 743L1053 745.5L1016.5 745.5L1011.5 740.5z"/><path d="M980 753L982.5 753L986.5 757L986.5 776.7L984 776.7L980 772.7z"/><path d="M1046 753L1048.5 753L1052.5 757L1052.5 776.7L1050 776.7L1046 772.7z"/><path d="M859 723L908 723L913 728L913 739L864 739L859 734z"/><path d="M859 760L908 760L913 765L913 776.5L864 776.5L859 771.5z"/><path d="M859 773L988.7 773L996.7 781L996.7 792.7L867 792.7L859 784.7z"/><path d="M1002 773L1049 773L1057 781L1057 792.7L1010 792.7L1002 784.7z"/><path d="M1062 773L1074 773L1082 781L1082 792.7L1070 792.7L1062 784.7z"/><path d="M854 805L864.5 805L878.5 819L878.5 825.5L868 825.5L854 811.5z"/><path d="M934 801L944.5 801L958.5 815L958.5 825.5L948 825.5L934 811.5z"/><path d="M854 790L859 790L863 794L863 809L858 809L854 805z"/><path d="M533.7 894.6L543.7 894.6L562.7 913.6L562.7 923L552.7 923L533.7 904z"/><path d="M661 894.6L671 894.6L690 913.6L690 923L680 923L661 904z"/><path d="M741 894.6L751 894.6L770 913.6L770 923L760 923L741 904z"/><path d="M854 894.6L864 894.6L883 913.6L883 923L873 923L854 904z"/><path d="M934 894.6L944 894.6L963 913.6L963 923L953 923L934 904z"/></g>
<g fill="#000" opacity=".09"><path d="M628.8 418.5L640.3 418.5L649.3 427.5L649.3 439L637.8 439L628.8 430z"/><path d="M741 418.5L752.5 418.5L761.5 427.5L761.5 439L750 439L741 430z"/><path d="M852.5 418.5L864 418.5L873 427.5L873 439L861.5 439L852.5 430z"/><path d="M934 418.5L945.5 418.5L954.5 427.5L954.5 439L943 439L934 430z"/><path d="M1051 418.5L1062.5 418.5L1071.5 427.5L1071.5 439L1060 439L1051 430z"/><path d="M746 452L757 452L766 461L766 471L755 471L746 462z"/><path d="M849 452L860 452L869 461L869 471L858 471L849 462z"/><path d="M661 486L671 486L680 495L680 505L670 505L661 496z"/><path d="M934 486L944 486L953 495L953 505L943 505L934 496z"/><path d="M661 596L671 596L680 605L680 615L670 615L661 606z"/><path d="M963 601.7L973 601.7L982 610.7L982 620L972 620L963 611z"/><path d="M963 638L973 638L982 647L982 657L972 657L963 648z"/><path d="M746 601.8L765.6 601.8L774.6 610.8L774.6 616.5L755 616.5L746 607.5z"/><path d="M839 601.8L859 601.8L868 610.8L868 616.5L848 616.5L839 607.5z"/><path d="M533.7 894.6L543.7 894.6L553.2 904.1L553.2 913.5L543.2 913.5L533.7 904z"/><path d="M661 894.6L671 894.6L680.5 904.1L680.5 913.5L670.5 913.5L661 904z"/><path d="M741 894.6L751 894.6L760.5 904.1L760.5 913.5L750.5 913.5L741 904z"/><path d="M854 894.6L864 894.6L873.5 904.1L873.5 913.5L863.5 913.5L854 904z"/><path d="M934 894.6L944 894.6L953.5 904.1L953.5 913.5L943.5 913.5L934 904z"/></g>
<g fill="#000" opacity=".3"><path d="M580.5 253.6L605 253.6L610 258.6L610 332L585.5 332L580.5 327z"/><path d="M567 259L578.5 259L581.5 262L581.5 273L570 273L567 270z"/><path d="M607 259L619 259L622 262L622 273L610 273L607 270z"/><path d="M567 271.8L578.5 271.8L581.5 274.8L581.5 285.8L570 285.8L567 282.8z"/><path d="M607 271.8L619 271.8L622 274.8L622 285.8L610 285.8L607 282.8z"/><path d="M567 284.6L578.5 284.6L581.5 287.6L581.5 298.6L570 298.6L567 295.6z"/><path d="M607 284.6L619 284.6L622 287.6L622 298.6L610 298.6L607 295.6z"/><path d="M567 297.4L578.5 297.4L581.5 300.4L581.5 311.4L570 311.4L567 308.4z"/><path d="M607 297.4L619 297.4L622 300.4L622 311.4L610 311.4L607 308.4z"/><path d="M567 310.2L578.5 310.2L581.5 313.2L581.5 324.2L570 324.2L567 321.2z"/><path d="M607 310.2L619 310.2L622 313.2L622 324.2L610 324.2L607 321.2z"/><path d="M696.5 282.5L794 282.5L801 289.5L801 368.6L703.5 368.6L696.5 361.6z"/><path d="M745 322l6 6" stroke="#000" stroke-width="22.8" stroke-linecap="round"/><path d="M862 245L1073 245L1078 250L1078 343L867 343L862 338z"/><path d="M902 352L920 352L925 357L925 393.5L907 393.5L902 388.5z"/><path d="M935 352L953 352L958 357L958 393.5L940 393.5L935 388.5z"/><path d="M972 352L990 352L995 357L995 393.5L977 393.5L972 388.5z"/><path d="M1005 352L1023 352L1028 357L1028 393.5L1010 393.5L1005 388.5z"/><path d="M922 376.5L932 376.5L936 380.5L936 392.5L926 392.5L922 388.5z"/><path d="M992.5 376.5L1002.5 376.5L1006.5 380.5L1006.5 392.5L996.5 392.5L992.5 388.5z"/><path d="M882 371l5 5" stroke="#000" stroke-width="22" stroke-linecap="round"/><path d="M1042 371l5 5" stroke="#000" stroke-width="22" stroke-linecap="round"/><circle cx="595" cy="389" r="35"/><path d="M606 391.5L627 391.5L631 395.5L631 426.5L610 426.5L606 422.5z"/><path d="M666 435l5 5" stroke="#000" stroke-width="7.2" stroke-linecap="round"/><path d="M666 478l5 5" stroke="#000" stroke-width="7.2" stroke-linecap="round"/><path d="M666 505l5 5" stroke="#000" stroke-width="7.2" stroke-linecap="round"/><path d="M666 587l5 5" stroke="#000" stroke-width="7.2" stroke-linecap="round"/><path d="M666 614l5 5" stroke="#000" stroke-width="7.2" stroke-linecap="round"/><path d="M939 438l5 5" stroke="#000" stroke-width="7.2" stroke-linecap="round"/><path d="M939 478l5 5" stroke="#000" stroke-width="7.2" stroke-linecap="round"/><path d="M755 616l5 5" stroke="#000" stroke-width="7.2" stroke-linecap="round"/><path d="M848 616l5 5" stroke="#000" stroke-width="7.2" stroke-linecap="round"/><path d="M666 669l5 5" stroke="#000" stroke-width="7.2" stroke-linecap="round"/><path d="M755 669l5 5" stroke="#000" stroke-width="7.2" stroke-linecap="round"/><path d="M848 669l5 5" stroke="#000" stroke-width="7.2" stroke-linecap="round"/><path d="M968 626l5 5" stroke="#000" stroke-width="7.2" stroke-linecap="round"/><path d="M968 658l5 5" stroke="#000" stroke-width="7.2" stroke-linecap="round"/><path d="M1066 451L1076 451L1076 451L1076 600L1066 600L1066 600z"/><path d="M591 464L613.7 464L618.7 469L618.7 565L596 565L591 560z"/><path d="M583.4 476l4 4" stroke="#000" stroke-width="9.2" stroke-linecap="round"/><path d="M583.4 488l4 4" stroke="#000" stroke-width="9.2" stroke-linecap="round"/><path d="M618 499L627 499L631 503L631 511.5L622 511.5L618 507.5z"/><path d="M618 510L627 510L631 514L631 522.5L622 522.5L618 518.5z"/><path d="M618 521L627 521L631 525L631 533.5L622 533.5L618 529.5z"/><path d="M578.6 526L588 526L592 530L592 538.5L582.6 538.5L578.6 534.5z"/><path d="M578.6 537.5L588 537.5L592 541.5L592 550L582.6 550L578.6 546z"/><path d="M578.6 549L588 549L592 553L592 561.5L582.6 561.5L578.6 557.5z"/><path d="M589 587.4l5 5" stroke="#000" stroke-width="16" stroke-linecap="round"/><path d="M611 587.4l5 5" stroke="#000" stroke-width="16" stroke-linecap="round"/><path d="M589 609.4l5 5" stroke="#000" stroke-width="16" stroke-linecap="round"/><path d="M611 609.4l5 5" stroke="#000" stroke-width="16" stroke-linecap="round"/><path d="M600 598.4l3 3" stroke="#000" stroke-width="17" stroke-linecap="round"/><path d="M601.5 648l5 5" stroke="#000" stroke-width="12" stroke-linecap="round"/><path d="M588 662l5 5" stroke="#000" stroke-width="16" stroke-linecap="round"/><path d="M615 662l5 5" stroke="#000" stroke-width="16" stroke-linecap="round"/><path d="M678 498L685 498L689 502L689 549L682 549L678 545z"/><path d="M686 494.8L708.5 494.8L713.5 499.8L713.5 567L691 567L686 562z"/><path d="M686 546.5L755 546.5L760 551.5L760 567L691 567L686 562z"/><path d="M746 549L756 549L760 553L760 564L750 564L746 560z"/><path d="M724.7 480l5 5" stroke="#000" stroke-width="11" stroke-linecap="round"/><path d="M742 480l5 5" stroke="#000" stroke-width="11" stroke-linecap="round"/><path d="M777.5 474L815.4 474L820.4 479L820.4 498L782.5 498L777.5 493z"/><path d="M820 483.7l5 5" stroke="#000" stroke-width="12" stroke-linecap="round"/><path d="M851 482L860 482L864 486L864 498L855 498L851 494z"/><path d="M859 479L918.5 479L923.5 484L923.5 503L864 503L859 498z"/><path d="M897.5 498L918.5 498L923.5 503L923.5 552L902.5 552L897.5 547z"/><path d="M920 492L927 492L931 496L931 541L924 541L920 537z"/><path d="M923.5 487.5l2 2" stroke="#000" stroke-width="6" stroke-linecap="round"/><path d="M726 510L748 510L753 515L753 531L731 531L726 526z"/><path d="M730 520L742 520L747 525L747 539L735 539L730 534z"/><path d="M750 529l4 4" stroke="#000" stroke-width="10" stroke-linecap="round"/><path d="M858 512L879 512L884 517L884 536L863 536L858 531z"/><path d="M855 513l4 4" stroke="#000" stroke-width="10" stroke-linecap="round"/><path d="M797 523l6 6" stroke="#000" stroke-width="18" stroke-linecap="round"/><path d="M807 528.5l4 4" stroke="#000" stroke-width="9.6" stroke-linecap="round"/><rect x="784" y="556.5" width="14" height="14" rx="3" transform="rotate(-25 791 563.5)"/><rect x="808" y="556.5" width="14" height="14" rx="3" transform="rotate(25 815 563.5)"/><path d="M798 562l3 3" stroke="#000" stroke-width="6" stroke-linecap="round"/><path d="M837.8 562l5 5" stroke="#000" stroke-width="11" stroke-linecap="round"/><path d="M854.3 562l5 5" stroke="#000" stroke-width="11" stroke-linecap="round"/><rect x="891" y="553" width="13" height="25" rx="3" transform="rotate(-35 897 565) translate(5 5)"/><path d="M910 562l2 2" stroke="#000" stroke-width="6" stroke-linecap="round"/><path d="M895 576.5l2 2" stroke="#000" stroke-width="6" stroke-linecap="round"/><path d="M988 494L1026 494L1032 500L1032 569.7L994 569.7L988 563.7z"/><path d="M992 454.7l5 5" stroke="#000" stroke-width="16" stroke-linecap="round"/><path d="M1020.6 454.7l5 5" stroke="#000" stroke-width="16" stroke-linecap="round"/><path d="M1006.5 468l5 5" stroke="#000" stroke-width="11" stroke-linecap="round"/><circle cx="807" cy="645.7" r="33"/><path d="M893 604.5l3 3" stroke="#000" stroke-width="4.8" stroke-linecap="round"/><path d="M901.7 604.5l3 3" stroke="#000" stroke-width="4.8" stroke-linecap="round"/><path d="M910.4 604.5l3 3" stroke="#000" stroke-width="4.8" stroke-linecap="round"/><path d="M919.1 604.5l3 3" stroke="#000" stroke-width="4.8" stroke-linecap="round"/><path d="M858 671.5L881 671.5L885 675.5L885 681.5L862 681.5L858 677.5z"/><path d="M936 671.5L959 671.5L963 675.5L963 681.5L940 681.5L936 677.5z"/><path d="M907.3 634l5 5" stroke="#000" stroke-width="11" stroke-linecap="round"/><path d="M893.6 647l5 5" stroke="#000" stroke-width="17" stroke-linecap="round"/><path d="M920 647l5 5" stroke="#000" stroke-width="17" stroke-linecap="round"/><rect x="1008.8" y="625" width="11" height="11" rx="1.500" transform="rotate(45 1014.3 630.5)"/><rect x="1031.8" y="625" width="11" height="11" rx="1.500" transform="rotate(45 1037.3 630.5)"/><rect x="1008.8" y="648" width="11" height="11" rx="1.500" transform="rotate(45 1014.3 653.5)"/><rect x="1031.8" y="648" width="11" height="11" rx="1.500" transform="rotate(45 1037.3 653.5)"/><rect x="1017.800" y="634" width="16" height="16" transform="rotate(45 1025.800 642)"/><path d="M786 684L825.5 684L830.5 689L830.5 720L791 720L786 715z"/><path d="M760 690L779 690L784 695L784 715L765 715L760 710z"/><path d="M830.7 690L849.6 690L854.6 695L854.6 715L835.7 715L830.7 710z"/><path d="M746.5 686L755 686L759 690L759 717L750.5 717L746.5 713z"/><path d="M752 721l5 5" stroke="#000" stroke-width="7.2" stroke-linecap="round"/><path d="M752 790l5 5" stroke="#000" stroke-width="7.2" stroke-linecap="round"/><path d="M792 742.7L818.6 742.7L824.6 748.7L824.6 775.5L798 775.5L792 769.5z"/><path d="M754 815L771 815L776 820L776 833L759 833L754 828z"/><path d="M834 815L853 815L858 820L858 833L839 833L834 828z"/><path d="M547 742A52 52 0 0 1 592 690" fill="none" stroke="#000" stroke-width="15" transform="translate(5 5)"/><rect x="575" y="684" width="19" height="17" transform="rotate(18 584 692) translate(5 5)"/><path d="M600 789C630 790 648 775 650 752" fill="none" stroke="#000" stroke-width="15" transform="translate(5 5)"/><path d="M581.6 730.6l7 7" stroke="#000" stroke-width="28" stroke-linecap="round"/><path d="M611 761.6l7 7" stroke="#000" stroke-width="28" stroke-linecap="round"/><path d="M602.6 704l5 5" stroke="#000" stroke-width="14" stroke-linecap="round"/><path d="M637 740l5 5" stroke="#000" stroke-width="15" stroke-linecap="round"/><path d="M544.5 779L566 779L571 784L571 806.5L549.5 806.5L544.5 801.5z"/><path d="M668 703L679 703L683 707L683 726L672 726L668 722z"/><path d="M668 732L679 732L683 736L683 776L672 776L668 772z"/><path d="M668.5 759L678.5 759L681.5 762L681.5 774L671.5 774L668.5 771z"/><path d="M668 785L679 785L683 789L683 810L672 810L668 806z"/><path d="M996.7 685L1009 685L1013 689L1013 727.6L1000.7 727.6L996.7 723.6z"/><path d="M1062.8 685L1074 685L1078 689L1078 727.6L1066.8 727.6L1062.8 723.6z"/><path d="M953.4 694L980.7 694L985.7 699L985.7 719.5L958.4 719.5L953.4 714.5z"/><path d="M1019.5 694L1047 694L1052 699L1052 719.5L1024.5 719.5L1019.5 714.5z"/><path d="M951 723L958 723L961 726L961 734L954 734L951 731z"/><path d="M1017 723L1024 723L1027 726L1027 734L1020 734L1017 731z"/><path d="M895.5 708L904.5 708L906.5 710L906.5 719L897.5 719L895.5 717z"/><rect x="560.2" y="815.3" width="30.5" height="84.3" rx="5" transform="translate(5.500 5)"/><rect x="613.8" y="815.3" width="30.5" height="84.3" rx="5" transform="translate(5.500 5)"/><rect x="690.3" y="815.3" width="30.5" height="84.3" rx="5" transform="translate(5.500 5)"/><rect x="888" y="815.3" width="30.5" height="84.3" rx="5" transform="translate(5.500 5)"/><rect x="966.8" y="815.3" width="30.5" height="84.3" rx="5" transform="translate(5.500 5)"/><rect x="1023.8" y="815.3" width="30.5" height="84.3" rx="5" transform="translate(5.500 5)"/></g>
<g><rect x="580.5" y="253.6" width="24.5" height="73.4" fill="#fff" stroke="#333" stroke-width="0.7"/>
<rect x="567" y="259" width="11.5" height="11" fill="#fff" stroke="#333" stroke-width="0.7"/>
<rect x="607" y="259" width="12" height="11" fill="#fff" stroke="#333" stroke-width="0.7"/>
<rect x="567" y="271.8" width="11.5" height="11" fill="#fff" stroke="#333" stroke-width="0.7"/>
<rect x="607" y="271.8" width="12" height="11" fill="#fff" stroke="#333" stroke-width="0.7"/>
<rect x="567" y="284.6" width="11.5" height="11" fill="#fff" stroke="#333" stroke-width="0.7"/>
<rect x="607" y="284.6" width="12" height="11" fill="#fff" stroke="#333" stroke-width="0.7"/>
<rect x="567" y="297.4" width="11.5" height="11" fill="#fff" stroke="#333" stroke-width="0.7"/>
<rect x="607" y="297.4" width="12" height="11" fill="#fff" stroke="#333" stroke-width="0.7"/>
<rect x="567" y="310.2" width="11.5" height="11" fill="#fff" stroke="#333" stroke-width="0.7"/>
<rect x="607" y="310.2" width="12" height="11" fill="#fff" stroke="#333" stroke-width="0.7"/>
<rect x="646" y="244.5" width="197" height="157" fill="#fdfdfd" stroke="#3a3a3a" stroke-width="1.1" rx="15"/>
<rect x="648" y="246.5" width="193" height="153" fill="url(#spk)" stroke="#888" stroke-width="0.5" rx="13.5"/>
<rect x="672" y="269.5" width="145.5" height="105.5" fill="#eeeeee" stroke="#3a3a3a" stroke-width="1.1" rx="18"/>
<rect x="674" y="271.5" width="141.5" height="101.5" fill="none" stroke="#999" stroke-width="0.5" rx="16"/>
<rect x="696.5" y="282.5" width="97.5" height="79.1" fill="#fff" stroke="#444" stroke-width="0.9"/>
<rect x="699.5" y="285.5" width="91.5" height="73.1" fill="#fff" stroke="#333" stroke-width="1.1"/>
<rect x="716" y="302" width="57" height="40" fill="url(#sunk)" stroke="#666" stroke-width="0.6" rx="3"/>
<path d="M737 342h18v19.500h-18z" fill="#fff" stroke="#444" stroke-width="0.7"/><path d="M737 348.500h18M737 355h18" stroke="#999" stroke-width="0.6"/>
<rect x="717" y="286.5" width="12" height="3" fill="#f4f4f4" stroke="#777" stroke-width="0.5"/>
<rect x="732" y="286.5" width="12" height="3" fill="#f4f4f4" stroke="#777" stroke-width="0.5"/>
<rect x="747" y="286.5" width="12" height="3" fill="#f4f4f4" stroke="#777" stroke-width="0.5"/>
<rect x="762" y="286.5" width="12" height="3" fill="#f4f4f4" stroke="#777" stroke-width="0.5"/>
<rect x="700" y="301" width="3" height="12" fill="#f4f4f4" stroke="#777" stroke-width="0.5"/>
<rect x="787.5" y="301" width="3" height="12" fill="#f4f4f4" stroke="#777" stroke-width="0.5"/>
<rect x="700" y="316" width="3" height="12" fill="#f4f4f4" stroke="#777" stroke-width="0.5"/>
<rect x="787.5" y="316" width="3" height="12" fill="#f4f4f4" stroke="#777" stroke-width="0.5"/>
<rect x="700" y="331" width="3" height="12" fill="#f4f4f4" stroke="#777" stroke-width="0.5"/>
<rect x="787.5" y="331" width="3" height="12" fill="#f4f4f4" stroke="#777" stroke-width="0.5"/>
<circle cx="745" cy="322" r="11.4" fill="#fff" stroke="#333" stroke-width="0.7"/>
<circle cx="745" cy="322" r="6" fill="none" stroke="#888" stroke-width="0.6"/>
<rect x="862" y="245" width="211" height="93" fill="#c4ccd6" stroke="#777" stroke-width="0.7"/>
<rect x="863.5" y="246.5" width="208" height="90" fill="none" stroke="#ffffff" stroke-width="1.6"/>
<rect x="902" y="352" width="18" height="36.5" fill="#fff" stroke="#666" stroke-width="0.7"/>
<path d="M905 382h12" stroke="#bbb" stroke-width="0.6"/>
<rect x="935" y="352" width="18" height="36.5" fill="#fff" stroke="#666" stroke-width="0.7"/>
<path d="M938 382h12" stroke="#bbb" stroke-width="0.6"/>
<rect x="972" y="352" width="18" height="36.5" fill="#fff" stroke="#666" stroke-width="0.7"/>
<path d="M975 382h12" stroke="#bbb" stroke-width="0.6"/>
<rect x="1005" y="352" width="18" height="36.5" fill="#fff" stroke="#666" stroke-width="0.7"/>
<path d="M1008 382h12" stroke="#bbb" stroke-width="0.6"/>
<rect x="922" y="376.5" width="10" height="12" fill="#fff" stroke="#666" stroke-width="0.7"/>
<rect x="992.5" y="376.5" width="10" height="12" fill="#fff" stroke="#666" stroke-width="0.7"/>
<circle cx="882" cy="371" r="11" fill="#fff" stroke="#555" stroke-width="0.7"/>
<rect x="877" y="366" width="10" height="10" fill="#fff" stroke="#777" stroke-width="0.5" rx="1"/>
<circle cx="1042" cy="371" r="11" fill="#fff" stroke="#555" stroke-width="0.7"/>
<rect x="1037" y="366" width="10" height="10" fill="#fff" stroke="#777" stroke-width="0.5" rx="1"/>
<circle cx="591" cy="385" r="35" fill="#fdfdfd" stroke="#333" stroke-width="1.1"/>
<path d="M604.5 385L626 385M604.2 387.8L625.2 392.3M603.3 390.5L623 399.2M601.9 392.9L619.3 405.6M600 395L614.4 411M597.8 396.7L608.5 415.3M595.2 397.8L601.8 418.3M592.4 398.4L594.7 419.8M589.6 398.4L587.3 419.8M586.8 397.8L580.2 418.3M584.2 396.7L573.5 415.3M582 395L567.6 411M580.1 392.9L562.7 405.6M578.7 390.5L559 399.2M577.8 387.8L556.8 392.3M577.5 385L556 385M577.8 382.2L556.8 377.7M578.7 379.5L559 370.8M580.1 377.1L562.7 364.4M582 375L567.6 359M584.2 373.3L573.5 354.7M586.8 372.2L580.2 351.7M589.6 371.6L587.3 350.2M592.4 371.6L594.7 350.2M595.2 372.2L601.8 351.7M597.8 373.3L608.5 354.7M600 375L614.4 359M601.9 377.1L619.3 364.4M603.3 379.5L623 370.8M604.2 382.2L625.2 377.7M604.5 385L626 385" stroke="#555" stroke-width="0.6" fill="none"/>
<circle cx="591" cy="385" r="24.2" fill="none" stroke="#777" stroke-width="0.5"/>
<circle cx="591" cy="385" r="13.5" fill="#e2e2e2" stroke="#333" stroke-width="1.1"/>
<rect x="604.5" y="391.5" width="22.5" height="31" fill="#f6f6f6" stroke="#333" stroke-width="1"/>
<path d="M604.500 385V391.500" stroke="#333" stroke-width="1"/>
<path d="M609 405l4-3M611 410l5-2" stroke="#777" stroke-width="0.500"/>
<path d="M538 423H981M1016 423H1076" stroke="#3a3a3a" stroke-width="1.8"/>
<path d="M538 421.500H981M1016 421.500H1076" stroke="#888" stroke-width="0.6"/>
<rect x="628.8" y="418.5" width="11.5" height="11.5" fill="#8c8c8c" stroke="#333" stroke-width="0.8"/>
<rect x="741" y="418.5" width="11.5" height="11.5" fill="#8c8c8c" stroke="#333" stroke-width="0.8"/>
<rect x="852.5" y="418.5" width="11.5" height="11.5" fill="#8c8c8c" stroke="#333" stroke-width="0.8"/>
<rect x="934" y="418.5" width="11.5" height="11.5" fill="#8c8c8c" stroke="#333" stroke-width="0.8"/>
<rect x="1051" y="418.5" width="11.5" height="11.5" fill="#8c8c8c" stroke="#333" stroke-width="0.8"/>
<rect x="1062.5" y="418.5" width="13.5" height="11.5" fill="#8c8c8c" stroke="#333" stroke-width="0.8"/>
<path d="M981 408V424M1016 408V424" stroke="#333" stroke-width="1"/><path d="M981 408A17 17 0 0 1 998 423M1016 408A17 17 0 0 0 999 423" stroke="#aaa" stroke-width="0.5" fill="none" stroke-dasharray="2 1.5"/>
<rect x="746" y="452" width="11" height="10" fill="#000"/>
<rect x="849" y="452" width="11" height="10" fill="#000"/>
<rect x="661" y="486" width="10" height="10" fill="#000"/>
<rect x="934" y="486" width="10" height="10" fill="#000"/>
<rect x="661" y="596" width="10" height="10" fill="#000"/>
<rect x="963" y="601.7" width="10" height="9.3" fill="#000"/>
<rect x="963" y="638" width="10" height="10" fill="#000"/>
<rect x="746" y="601.8" width="19.6" height="5.7" fill="#000"/>
<rect x="839" y="601.8" width="20" height="5.7" fill="#000"/>
<circle cx="666" cy="435" r="3.6" fill="#fff" stroke="#555" stroke-width="0.6"/>
<circle cx="666" cy="478" r="3.6" fill="#fff" stroke="#555" stroke-width="0.6"/>
<circle cx="666" cy="505" r="3.6" fill="#fff" stroke="#555" stroke-width="0.6"/>
<circle cx="666" cy="587" r="3.6" fill="#fff" stroke="#555" stroke-width="0.6"/>
<circle cx="666" cy="614" r="3.6" fill="#fff" stroke="#555" stroke-width="0.6"/>
<circle cx="939" cy="438" r="3.6" fill="#fff" stroke="#555" stroke-width="0.6"/>
<circle cx="939" cy="478" r="3.6" fill="#fff" stroke="#555" stroke-width="0.6"/>
<circle cx="755" cy="616" r="3.6" fill="#fff" stroke="#555" stroke-width="0.6"/>
<circle cx="848" cy="616" r="3.6" fill="#fff" stroke="#555" stroke-width="0.6"/>
<circle cx="666" cy="669" r="3.6" fill="#fff" stroke="#555" stroke-width="0.6"/>
<circle cx="755" cy="669" r="3.6" fill="#fff" stroke="#555" stroke-width="0.6"/>
<circle cx="848" cy="669" r="3.6" fill="#fff" stroke="#555" stroke-width="0.6"/>
<circle cx="968" cy="626" r="3.6" fill="#fff" stroke="#555" stroke-width="0.6"/>
<circle cx="968" cy="658" r="3.6" fill="#fff" stroke="#555" stroke-width="0.6"/>
<rect x="538" y="424" width="8.5" height="255" fill="#c2c2c2" stroke="#555" stroke-width="0.6"/>
<path d="M538 441h8.500M538 457h8.500M538 473h8.500M538 489h8.500M538 505h8.500M538 521h8.500M538 537h8.500M538 553h8.500M538 569h8.500M538 585h8.500M538 601h8.500M538 617h8.500M538 633h8.500M538 649h8.500M538 665h8.500" stroke="#666" stroke-width="0.6"/>
<rect x="1066" y="451" width="10" height="149" fill="#fafafa" stroke="#999" stroke-width="0.5"/>
<path d="M1066 451h10M1066 492h10M1066 516h10M1066 537h10M1066 583h10M1066 600h10" stroke="#555" stroke-width="0.8"/>
<rect x="591" y="464" width="22.7" height="96" fill="#fff" stroke="#333" stroke-width="0.7"/>
<rect x="594" y="468" width="15.5" height="29" fill="#fff" stroke="#555" stroke-width="0.6"/>
<circle cx="602.500" cy="488" r="4.500" fill="none" stroke="#444" stroke-width="0.7"/><path d="M600 486l5 4" stroke="#444" stroke-width="0.7"/>
<circle cx="583.4" cy="476" r="4.6" fill="#fff" stroke="#333" stroke-width="0.7"/>
<circle cx="583.4" cy="488" r="4.6" fill="#fff" stroke="#333" stroke-width="0.7"/>
<rect x="618" y="499" width="9" height="8.5" fill="#fff" stroke="#333" stroke-width="0.7"/>
<rect x="618" y="510" width="9" height="8.5" fill="#fff" stroke="#333" stroke-width="0.7"/>
<rect x="618" y="521" width="9" height="8.5" fill="#fff" stroke="#333" stroke-width="0.7"/>
<rect x="578.6" y="526" width="9.4" height="8.5" fill="#fff" stroke="#333" stroke-width="0.7"/>
<rect x="578.6" y="537.5" width="9.4" height="8.5" fill="#fff" stroke="#333" stroke-width="0.7"/>
<rect x="578.6" y="549" width="9.4" height="8.5" fill="#fff" stroke="#333" stroke-width="0.7"/>
<circle cx="589" cy="587.4" r="8" fill="#fff" stroke="#333" stroke-width="0.9"/>
<circle cx="589.9" cy="588.3" r="5.500" fill="#fff" stroke="#777" stroke-width="0.5"/>
<circle cx="611" cy="587.4" r="8" fill="#fff" stroke="#333" stroke-width="0.9"/>
<circle cx="610.1" cy="588.3" r="5.500" fill="#fff" stroke="#777" stroke-width="0.5"/>
<circle cx="589" cy="609.4" r="8" fill="#fff" stroke="#333" stroke-width="0.9"/>
<circle cx="589.9" cy="608.5" r="5.500" fill="#fff" stroke="#777" stroke-width="0.5"/>
<circle cx="611" cy="609.4" r="8" fill="#fff" stroke="#333" stroke-width="0.9"/>
<circle cx="610.1" cy="608.5" r="5.500" fill="#fff" stroke="#777" stroke-width="0.5"/>
<circle cx="600" cy="598.4" r="8.5" fill="#fff" stroke="#333" stroke-width="0.9"/>
<circle cx="600" cy="598.400" r="7" fill="none" stroke="#999" stroke-width="0.5"/>
<circle cx="601.5" cy="648" r="6" fill="#fff" stroke="#333" stroke-width="0.7"/>
<circle cx="588" cy="662" r="8" fill="#fff" stroke="#333" stroke-width="0.9"/>
<circle cx="588" cy="659.500" r="5" fill="#fff" stroke="#777" stroke-width="0.5"/>
<circle cx="615" cy="662" r="8" fill="#fff" stroke="#333" stroke-width="0.9"/>
<circle cx="615" cy="659.500" r="5" fill="#fff" stroke="#777" stroke-width="0.5"/>
<rect x="678" y="498" width="7" height="47" fill="#fff" stroke="#333" stroke-width="0.7"/>
<path d="M686 494.800H708.500V546.500H755V562H686z" fill="#fff" stroke="#333" stroke-width="0.9"/>
<path d="M690 494.800V562M690 512h18.500M690 529h18.500M690 546.500h18.500" stroke="#555" stroke-width="0.6" fill="none"/>
<path d="M711 547v15M714.2 547v15M717.4 547v15M720.6 547v15M723.8 547v15M727 547v15M730.2 547v15M733.4 547v15M736.6 547v15M739.8 547v15M743 547v15" stroke="#666" stroke-width="0.5"/>
<rect x="693" y="497" width="9" height="11" fill="#fff" stroke="#444" stroke-width="0.6" transform="rotate(-20 697 502)"/>
<rect x="692" y="518" width="9" height="11" fill="#fff" stroke="#444" stroke-width="0.6" transform="rotate(15 696 523)"/>
<rect x="693" y="538" width="9" height="11" fill="#fff" stroke="#444" stroke-width="0.6" transform="rotate(-15 697 543)"/>
<rect x="693" y="551" width="9" height="11" fill="#fff" stroke="#444" stroke-width="0.6" transform="rotate(25 697 556)"/>
<rect x="746" y="549" width="10" height="11" fill="#fff" stroke="#333" stroke-width="0.7" rx="2"/>
<circle cx="724.7" cy="480" r="5.5" fill="#fff" stroke="#333" stroke-width="0.7"/>
<circle cx="742" cy="480" r="5.5" fill="#fff" stroke="#333" stroke-width="0.7"/>
<rect x="777.5" y="474" width="37.9" height="19" fill="#fff" stroke="#333" stroke-width="0.7"/>
<path d="M780 474v19M783.2 474v19M786.4 474v19M789.6 474v19M792.8 474v19M796 474v19M799.2 474v19M802.4 474v19M805.6 474v19M808.8 474v19M812 474v19" stroke="#666" stroke-width="0.5"/>
<circle cx="820" cy="483.7" r="6" fill="#fff" stroke="#333" stroke-width="0.7"/>
<rect x="851" y="482" width="9" height="12" fill="#fff" stroke="#333" stroke-width="0.7"/>
<path d="M859 479H918.500V547H897.500V498H859z" fill="#fff" stroke="#333" stroke-width="0.9"/>
<path d="M880 479v19M883.2 479v19M886.4 479v19M889.6 479v19M892.8 479v19M896 479v19M899.2 479v19M902.4 479v19" stroke="#666" stroke-width="0.5"/>
<path d="M914.500 479V547M897.500 513h17M897.500 530h17" stroke="#555" stroke-width="0.6" fill="none"/>
<rect x="905" y="481" width="9" height="11" fill="#fff" stroke="#444" stroke-width="0.6" transform="rotate(30 909 486)"/>
<rect x="903" y="503" width="9" height="11" fill="#fff" stroke="#444" stroke-width="0.6" transform="rotate(-20 907 508)"/>
<rect x="903" y="521" width="9" height="11" fill="#fff" stroke="#444" stroke-width="0.6" transform="rotate(20 907 526)"/>
<rect x="903" y="536" width="9" height="11" fill="#fff" stroke="#444" stroke-width="0.6" transform="rotate(-25 907 541)"/>
<rect x="920" y="492" width="7" height="45" fill="#fff" stroke="#333" stroke-width="0.7"/>
<circle cx="923.5" cy="487.5" r="3" fill="#fff" stroke="#333" stroke-width="0.7"/>
<path d="M726 510h10v3h6v-3h6v10h-6v14h-13v-8h-3z" fill="#fff" stroke="#444" stroke-width="0.7"/>
<circle cx="750" cy="529" r="5" fill="#fff" stroke="#333" stroke-width="0.7"/>
<path d="M862 512h10v4h7v9h-6v6h-13v-9h2z" fill="#fff" stroke="#444" stroke-width="0.7"/>
<circle cx="855" cy="513" r="5" fill="#fff" stroke="#333" stroke-width="0.7"/>
<circle cx="797" cy="523" r="9" fill="#fff" stroke="#333" stroke-width="0.7"/>
<circle cx="807" cy="528.5" r="4.8" fill="#fff" stroke="#333" stroke-width="0.7"/>
<circle cx="766" cy="527" r="2.200" fill="none" stroke="#555" stroke-width="0.5"/><path d="M761 527h10M766 522v10" stroke="#555" stroke-width="0.5"/>
<rect x="779" y="551.5" width="14" height="14" rx="3" fill="#fff" stroke="#333" stroke-width="0.8" transform="rotate(-25 786 558.5)"/>
<rect x="781.5" y="553" width="9" height="9" rx="2" fill="#fff" stroke="#777" stroke-width="0.5" transform="rotate(-25 786 558.5)"/>
<rect x="803" y="551.5" width="14" height="14" rx="3" fill="#fff" stroke="#333" stroke-width="0.8" transform="rotate(25 810 558.5)"/>
<rect x="805.5" y="553" width="9" height="9" rx="2" fill="#fff" stroke="#777" stroke-width="0.5" transform="rotate(25 810 558.5)"/>
<circle cx="798" cy="562" r="3" fill="#fff" stroke="#333" stroke-width="0.7"/>
<circle cx="837.8" cy="562" r="5.5" fill="#fff" stroke="#333" stroke-width="0.7"/>
<circle cx="854.3" cy="562" r="5.5" fill="#fff" stroke="#333" stroke-width="0.7"/>
<circle cx="899" cy="566" r="18" fill="#c4c4c4" stroke="#888" stroke-width="0.6"/>
<rect x="891" y="553" width="13" height="25" rx="3" fill="#fff" stroke="#333" stroke-width="0.8" transform="rotate(-35 897 565)"/>
<rect x="893" y="555" width="9" height="9" rx="2" fill="#fff" stroke="#777" stroke-width="0.5" transform="rotate(-35 897 565)"/>
<circle cx="910" cy="562" r="3" fill="#fff" stroke="#333" stroke-width="0.7"/>
<circle cx="895" cy="576.5" r="3" fill="#fff" stroke="#333" stroke-width="0.7"/>
<rect x="988" y="494" width="38" height="69.7" fill="#fff" stroke="#333" stroke-width="0.9" rx="2"/>
<rect x="990.5" y="496.5" width="33" height="64.7" fill="#fff" stroke="#444" stroke-width="0.6" rx="1.5"/>
<rect x="1002.5" y="515" width="9" height="28" fill="#fff" stroke="#666" stroke-width="0.5"/>
<path d="M1005.500 516v26M1008.500 516v26" stroke="#888" stroke-width="0.5"/>
<circle cx="992" cy="454.7" r="8" fill="#fff" stroke="#333" stroke-width="0.9"/>
<circle cx="992" cy="456.500" r="5" fill="#fff" stroke="#666" stroke-width="0.5"/>
<circle cx="1020.6" cy="454.7" r="8" fill="#fff" stroke="#333" stroke-width="0.9"/>
<circle cx="1020.6" cy="456.500" r="5" fill="#fff" stroke="#666" stroke-width="0.5"/>
<circle cx="1006.5" cy="468" r="5.5" fill="#fff" stroke="#333" stroke-width="0.7"/>
<circle cx="803" cy="641.7" r="33" fill="#fdfdfd" stroke="#333" stroke-width="1.1"/>
<path d="M791.1 637.8L771.6 631.5M792.1 635.6L774.2 625.6M793.5 633.6L777.8 620.4M795.2 631.9L782.4 615.9M797.2 630.6L787.8 612.4M799.5 629.7L793.7 610M801.9 629.3L800 608.8M804.3 629.3L806.4 608.9M806.7 629.8L812.7 610.2M808.9 630.7L818.6 612.6M810.9 632L823.9 616.2M812.6 633.7L828.5 620.7M814 635.8L832 626M814.9 638L834.5 631.9M815.4 640.4L835.8 638.2M815.5 642.8L835.9 644.6M815 645.2L834.7 650.9M814.1 647.4L832.3 656.8M812.8 649.5L828.9 662.2M811.1 651.2L824.4 666.8M809.1 652.6L819.2 670.5M806.9 653.6L813.3 673M804.5 654.1L807.1 674.4M802.1 654.2L800.7 674.6M799.7 653.8L794.3 673.5M797.5 652.9L788.4 671.3M795.4 651.6L782.9 667.9M793.6 650L778.2 663.5M792.2 648L774.5 658.3M791.2 645.8L771.8 652.5M790.6 643.4L770.3 646.3" stroke="#555" stroke-width="0.6" fill="none"/>
<circle cx="803" cy="641.7" r="22.8" fill="none" stroke="#777" stroke-width="0.5"/>
<circle cx="803" cy="641.7" r="12.5" fill="#e2e2e2" stroke="#333" stroke-width="1.1"/>
<path d="M803 641.700L769.500 646.500L771.500 631z" fill="#f3f3f3" stroke="none"/>
<path d="M791.100 637.800L771.600 631.500M790.600 643.400L770.300 646.300" stroke="#333" stroke-width="0.900"/>
<path d="M889 604.500h34" stroke="#444" stroke-width="1.2"/>
<circle cx="893" cy="604.5" r="2.4" fill="#fff" stroke="#333" stroke-width="0.6"/>
<circle cx="901.7" cy="604.5" r="2.4" fill="#fff" stroke="#333" stroke-width="0.6"/>
<circle cx="910.4" cy="604.5" r="2.4" fill="#fff" stroke="#333" stroke-width="0.6"/>
<circle cx="919.1" cy="604.5" r="2.4" fill="#fff" stroke="#333" stroke-width="0.6"/>
<rect x="858" y="671.5" width="23" height="6" fill="#fff" stroke="#333" stroke-width="0.7"/>
<path d="M858 671.500l5.500 6M863.8 671.500l-5.500 6M858 671.500v6M863.8 671.500l5.500 6M869.5 671.500l-5.500 6M863.8 671.500v6M869.5 671.500l5.500 6M875.2 671.500l-5.500 6M869.5 671.500v6M875.2 671.500l5.500 6M881 671.500l-5.500 6M875.2 671.500v6" stroke="#444" stroke-width="0.5"/>
<rect x="936" y="671.5" width="23" height="6" fill="#fff" stroke="#333" stroke-width="0.7"/>
<path d="M936 671.500l5.500 6M941.8 671.500l-5.500 6M936 671.500v6M941.8 671.500l5.500 6M947.5 671.500l-5.500 6M941.8 671.500v6M947.5 671.500l5.500 6M953.2 671.500l-5.500 6M947.5 671.500v6M953.2 671.500l5.500 6M959 671.500l-5.500 6M953.2 671.500v6" stroke="#444" stroke-width="0.5"/>
<path d="M974 601.700v9.500M978 601.700v9.500M982 601.700v9.500M984 601.700v9.500M986.5 601.700v9.500M989 601.700v9.500M992 601.700v9.500M995 601.700v9.500M998 601.700v9.500" stroke="#222" stroke-width="1.1"/>
<path d="M1047 601.700v9.500M1050.5 601.700v9.500M1053.3 601.700v9.500M1056.3 601.700v9.500M1059.3 601.700v9.500M1062.3 601.700v9.500M1064.8 601.700v9.500M1067.8 601.700v9.500M1070.3 601.700v9.500" stroke="#222" stroke-width="1.1"/>
<circle cx="907.3" cy="634" r="5.5" fill="#fff" stroke="#333" stroke-width="0.7"/>
<circle cx="893.6" cy="647" r="8.5" fill="#fff" stroke="#333" stroke-width="0.9"/>
<circle cx="893.6" cy="645" r="5.300" fill="#fff" stroke="#666" stroke-width="0.5"/>
<circle cx="920" cy="647" r="8.5" fill="#fff" stroke="#333" stroke-width="0.9"/>
<circle cx="920" cy="645" r="5.300" fill="#fff" stroke="#666" stroke-width="0.5"/>
<rect x="1004.8" y="621" width="11" height="11" rx="1.500" fill="#fff" stroke="#333" stroke-width="0.7" transform="rotate(45 1010.3 626.5)"/>
<rect x="1027.8" y="621" width="11" height="11" rx="1.500" fill="#fff" stroke="#333" stroke-width="0.7" transform="rotate(45 1033.3 626.5)"/>
<rect x="1004.8" y="644" width="11" height="11" rx="1.500" fill="#fff" stroke="#333" stroke-width="0.7" transform="rotate(45 1010.3 649.5)"/>
<rect x="1027.8" y="644" width="11" height="11" rx="1.500" fill="#fff" stroke="#333" stroke-width="0.7" transform="rotate(45 1033.3 649.5)"/>
<rect x="1013.800" y="630" width="16" height="16" fill="#fff" stroke="#333" stroke-width="0.8" transform="rotate(45 1021.800 638)"/>
<rect x="1016.800" y="633" width="10" height="10" fill="none" stroke="#555" stroke-width="0.5" transform="rotate(45 1021.800 638)"/>
<rect x="972" y="668" width="102" height="11" fill="#fff" stroke="#666" stroke-width="0.6"/>
<rect x="976" y="669.5" width="12" height="8.5" fill="#fff" stroke="#444" stroke-width="0.6"/>
<rect x="995" y="668" width="13" height="11" fill="#fff" stroke="#555" stroke-width="0.6"/>
<rect x="914" y="679" width="161" height="6" fill="#646464" stroke="#222" stroke-width="0.7"/>
<rect x="859" y="679" width="27" height="6" fill="#646464" stroke="#222" stroke-width="0.7"/>
<rect x="963" y="668" width="9" height="17" fill="#646464" stroke="#222" stroke-width="0.7"/>
<rect x="746" y="679" width="19" height="6" fill="#000" stroke="#222" stroke-width="0.7"/>
<rect x="839" y="679" width="20" height="6" fill="#000" stroke="#222" stroke-width="0.7"/>
<rect x="765" y="679" width="74" height="6" fill="#fff" stroke="#222" stroke-width="0.7"/>
<path d="M768 679v6M774 679v6M780 679v6M786 679v6M792 679v6M798 679v6M804 679v6M810 679v6M816 679v6M822 679v6M828 679v6M834 679v6" stroke="#222" stroke-width="1.6"/>
<rect x="854" y="685" width="5" height="126" fill="#646464" stroke="#222" stroke-width="0.7"/>
<path d="M747 685V798M750 685V798" stroke="#444" stroke-width="0.6"/>
<path d="M747.500 700V790M757 700V790" stroke="#aaa" stroke-width="0.5" stroke-dasharray="1 1"/>
<rect x="784" y="685" width="3.5" height="31" fill="#444" stroke="#222" stroke-width="0.5"/>
<rect x="824" y="685" width="3.5" height="31" fill="#444" stroke="#222" stroke-width="0.5"/>
<rect x="787.5" y="685" width="36.5" height="29" fill="#fff" stroke="#333" stroke-width="0.8"/>
<rect x="790.5" y="688" width="30.5" height="23" fill="#fff" stroke="#777" stroke-width="0.5"/>
<path d="M790.500 688L821 711M821 688L790.500 711" stroke="#999" stroke-width="0.5"/>
<rect x="760" y="690" width="19" height="20" fill="#fff" stroke="#333" stroke-width="0.7"/>
<rect x="762.5" y="692.5" width="14" height="15" fill="#fff" stroke="#888" stroke-width="0.5"/>
<rect x="830.7" y="690" width="18.9" height="20" fill="#fff" stroke="#333" stroke-width="0.7"/>
<rect x="833" y="692.5" width="14" height="15" fill="#fff" stroke="#888" stroke-width="0.5"/>
<rect x="746.5" y="686" width="8.5" height="27" fill="#fff" stroke="#333" stroke-width="0.7"/>
<path d="M746.500 695h8.500M746.500 704h8.500" stroke="#666" stroke-width="0.5"/>
<circle cx="752" cy="721" r="3.6" fill="#fff" stroke="#333" stroke-width="0.6"/>
<circle cx="752" cy="790" r="3.6" fill="#fff" stroke="#333" stroke-width="0.6"/>
<rect x="792" y="742.7" width="26.6" height="26.8" fill="#fff" stroke="#333" stroke-width="0.9"/>
<rect x="795" y="745.5" width="20.5" height="21" fill="#fff" stroke="#999" stroke-width="0.5"/>
<path d="M786 756h38" stroke="#999" stroke-width="0.5"/>
<rect x="746" y="798" width="5" height="13" fill="#000"/>
<rect x="854" y="798" width="5" height="13" fill="#000"/>
<path d="M746 809.500H782V833.500M860 809.500H828V833.500" stroke="#222" stroke-width="2" fill="none"/>
<rect x="730" y="806.5" width="17" height="4.5" fill="#777" stroke="#222" stroke-width="0.6"/>
<path d="M782 833.500A23 23 0 0 1 805 811M828 833.500A23 23 0 0 0 805 811" stroke="#aaa" stroke-width="0.5" fill="none" stroke-dasharray="1.500 1.500"/>
<rect x="754" y="815" width="17" height="13" fill="#fff" stroke="#333" stroke-width="0.7"/>
<rect x="834" y="815" width="19" height="13" fill="#fff" stroke="#333" stroke-width="0.7"/>
<path d="M538 680H662" stroke="#222" stroke-width="2"/>
<rect x="661" y="679" width="9.5" height="11" fill="#000" stroke="#222" stroke-width="0.7"/>
<path d="M538 808H665" stroke="#111" stroke-width="2.200"/>
<path d="M665 809.500H747" stroke="#555" stroke-width="1"/>
<rect x="661.5" y="700" width="3" height="109" fill="#111" stroke="#222" stroke-width="0.7"/>
<path d="M540 681V807" stroke="#444" stroke-width="0.700"/>
<path d="M540.500 741C540.500 710 560 688 592 683.500L596 697C570 700 555 716 554.500 743z" fill="#fdfdfd" stroke="#333" stroke-width="0.9"/>
<path d="M541.500 722l13.500 3M551 700l11 9M570 688l6 13" stroke="#666" stroke-width="0.600"/>
<path d="M541 741h14v-2h-14z" fill="#fff" stroke="#333" stroke-width=".6"/>
<rect x="575" y="684" width="19" height="17" fill="#fdfdfd" stroke="#333" stroke-width="0.800" transform="rotate(18 584 692)"/>
<path d="M597 781C625 783 640 770 641.500 752L656 749C656 780 632 798 599 796z" fill="#fdfdfd" stroke="#333" stroke-width="0.900"/>
<path d="M598 780.500l-2 16h34l-1-16z" fill="#fdfdfd" stroke="#333" stroke-width="0.800"/>
<path d="M643 772l10 8M630 779l3 15" stroke="#666" stroke-width="0.600"/>
<circle cx="581.6" cy="730.6" r="14" fill="#fff" stroke="#333" stroke-width="0.9"/>
<circle cx="611" cy="761.6" r="14" fill="#fff" stroke="#333" stroke-width="0.9"/>
<circle cx="602.6" cy="704" r="7" fill="#fff" stroke="#333" stroke-width="0.7"/>
<circle cx="637" cy="740" r="7.5" fill="#fff" stroke="#333" stroke-width="0.7"/>
<rect x="544.5" y="779" width="21.5" height="22.5" fill="#fff" stroke="#333" stroke-width="0.7"/>
<rect x="547" y="781.5" width="16.5" height="17.5" fill="#fff" stroke="#aaa" stroke-width="0.5"/>
<path d="M540 790h30M555 775v30" stroke="#999" stroke-width="0.400"/>
<rect x="668" y="703" width="11" height="19" fill="#fff" stroke="#333" stroke-width="0.7"/>
<circle cx="673.500" cy="712.500" r="2.500" fill="none" stroke="#333" stroke-width=".6"/>
<rect x="668" y="732" width="11" height="40" fill="#fff" stroke="#333" stroke-width="0.7"/>
<rect x="668.5" y="759" width="10" height="12" fill="#fff" stroke="#555" stroke-width="0.7"/>
<rect x="668" y="785" width="11" height="21" fill="#fff" stroke="#333" stroke-width="0.7"/>
<circle cx="673.500" cy="794" r="2.500" fill="none" stroke="#333" stroke-width=".6"/>
<rect x="854" y="718.6" width="88" height="4.4" fill="#646464" stroke="#222" stroke-width="0.7"/>
<rect x="942" y="685" width="3" height="87.7" fill="#646464" stroke="#222" stroke-width="0.7"/>
<rect x="1009" y="685" width="2.5" height="87.7" fill="#646464" stroke="#222" stroke-width="0.7"/>
<path d="M886 685V718.600M913 685V718.600" stroke="#333" stroke-width="1.200"/>
<rect x="907" y="723" width="3" height="13" fill="#333" stroke="#222" stroke-width="0.7"/>
<rect x="907" y="750" width="3" height="22.7" fill="#333" stroke="#222" stroke-width="0.7"/>
<rect x="945" y="738" width="37" height="2.5" fill="#444" stroke="#222" stroke-width="0.7"/>
<rect x="1011.5" y="738" width="36.5" height="2.5" fill="#444" stroke="#222" stroke-width="0.7"/>
<rect x="980" y="753" width="2.5" height="19.7" fill="#444" stroke="#222" stroke-width="0.7"/>
<rect x="1046" y="753" width="2.5" height="19.7" fill="#444" stroke="#222" stroke-width="0.7"/>
<rect x="859" y="723" width="49" height="11" fill="#fff" stroke="#222" stroke-width="1.1"/>
<path d="M871.2 723v11M883.5 723v11M895.8 723v11" stroke="#333" stroke-width="0.800"/>
<path d="M859 731h49" stroke="#bbb" stroke-width="0.600"/>
<rect x="859" y="760" width="49" height="11.5" fill="#fff" stroke="#222" stroke-width="1.1"/>
<path d="M871.2 760v11.5M883.5 760v11.5M895.8 760v11.5" stroke="#333" stroke-width="0.800"/>
<path d="M859 768.5h49" stroke="#bbb" stroke-width="0.600"/>
<rect x="859" y="773" width="129.7" height="11.7" fill="#fff" stroke="#222" stroke-width="1.1"/>
<path d="M869.8 773v11.7M880.6 773v11.7M891.4 773v11.7M902.2 773v11.7M913 773v11.7M923.9 773v11.7M934.7 773v11.7M945.5 773v11.7M956.3 773v11.7M967.1 773v11.7M977.9 773v11.7" stroke="#333" stroke-width="0.800"/>
<path d="M859 781.7h129.7" stroke="#bbb" stroke-width="0.600"/>
<rect x="1002" y="773" width="47" height="11.7" fill="#fff" stroke="#222" stroke-width="1.1"/>
<path d="M1013.8 773v11.7M1025.5 773v11.7M1037.2 773v11.7" stroke="#333" stroke-width="0.800"/>
<path d="M1002 781.7h47" stroke="#bbb" stroke-width="0.600"/>
<rect x="1062" y="773" width="12" height="11.7" fill="#fff" stroke="#222" stroke-width="1.1"/>
<path d="" stroke="#333" stroke-width="0.800"/>
<path d="M1062 781.7h12" stroke="#bbb" stroke-width="0.600"/>
<rect x="996.7" y="685" width="12.3" height="38.6" fill="#fff" stroke="#333" stroke-width="0.9"/>
<path d="M996.7 694.6h12.3M996.7 704.3h12.3M996.7 714h12.3" stroke="#444" stroke-width="0.700"/>
<rect x="1062.8" y="685" width="11.2" height="38.6" fill="#fff" stroke="#333" stroke-width="0.9"/>
<path d="M1062.8 694.6h11.2M1062.8 704.3h11.2M1062.8 714h11.2" stroke="#444" stroke-width="0.700"/>
<rect x="953.4" y="694" width="27.3" height="20.5" fill="#fff" stroke="#888" stroke-width="0.7"/>
<rect x="1019.5" y="694" width="27.5" height="20.5" fill="#fff" stroke="#888" stroke-width="0.7"/>
<rect x="945" y="688" width="8" height="34" fill="#e4e4e4" stroke="#555" stroke-width="0.6"/>
<rect x="1011.5" y="688" width="7.5" height="34" fill="#e4e4e4" stroke="#555" stroke-width="0.6"/>
<rect x="951" y="723" width="7" height="8" fill="#fff" stroke="#333" stroke-width="0.7"/>
<rect x="1017" y="723" width="7" height="8" fill="#fff" stroke="#333" stroke-width="0.7"/>
<ellipse cx="863" cy="694" rx="3" ry="4" fill="#fff" stroke="#333" stroke-width=".6"/><rect x="860" y="707" width="11" height="7" rx="2" fill="#fff" stroke="#333" stroke-width=".6"/>
<rect x="895.5" y="708" width="9" height="9" fill="#fff" stroke="#333" stroke-width="0.7"/>
<path d="M900 712v5" stroke="#333" stroke-width=".8"/>
<rect x="925" y="696" width="7" height="5" fill="#fff" stroke="#666" stroke-width="0.5"/>
<rect x="925" y="707" width="7" height="5" fill="#fff" stroke="#666" stroke-width="0.5"/>
<path d="M859 690A26 26 0 0 0 886 716M913 716A26 26 0 0 0 940 690" stroke="#aaa" stroke-width="0.500" fill="none" stroke-dasharray="1.500 1.500"/>
<rect x="929" y="727" width="12" height="7" fill="#fff" stroke="#555" stroke-width="0.6"/>
<ellipse cx="937" cy="748" rx="4" ry="5" fill="#fff" stroke="#333" stroke-width=".6"/><ellipse cx="937" cy="764" rx="3" ry="4" fill="#fff" stroke="#333" stroke-width=".6"/>
<rect x="946" y="742" width="7" height="9" fill="#fff" stroke="#333" stroke-width="0.7"/>
<rect x="947" y="760" width="7" height="9" fill="#fff" stroke="#444" stroke-width="0.6"/>
<path d="M945 753h8l9 9v10.500" stroke="#333" stroke-width="1.100" fill="none"/>
<rect x="968" y="759" width="6" height="10" rx="2.500" fill="#fff" stroke="#444" stroke-width=".6"/>
<rect x="1012.5" y="742" width="7" height="9" fill="#fff" stroke="#333" stroke-width="0.7"/>
<rect x="1013.5" y="760" width="7" height="9" fill="#fff" stroke="#444" stroke-width="0.6"/>
<path d="M1011.5 753h8l9 9v10.500" stroke="#333" stroke-width="1.100" fill="none"/>
<rect x="1034.5" y="759" width="6" height="10" rx="2.500" fill="#fff" stroke="#444" stroke-width=".6"/>
<rect x="854" y="805" width="10.5" height="6.5" fill="#000"/>
<path d="M940 801h4.500v10.500h-10.500v-5.500h6z" fill="#000"/>
<rect x="854" y="790" width="5" height="15" fill="#646464" stroke="#222" stroke-width="0.7"/>
<path d="M665 807H1075M538 811.500H1075" stroke="#999" stroke-width="0.500" stroke-dasharray="2 1"/>
<path d="M538 811H746" stroke="#888" stroke-width="0.800"/>
<path d="M538 904.500H1076M534 908.700H1080" stroke="#aaa" stroke-width="0.600" stroke-dasharray="2 1.500"/>
<path d="M944 811V790M934.500 811V790" stroke="#999" stroke-width="0.400" stroke-dasharray="1 1"/>
<g transform="translate(560.2 815.3)" fill="none" stroke="#333" stroke-width="0.700"><path d="M3.500 2.500C6 0 24.500 0 27 2.500C29.500 5 30.300 11 30.300 20L29.800 80C29.800 83 29 84 27 84.300H3.500C1.500 84 0.700 83 0.700 80L0.200 20C0.200 11 1 5 3.500 2.500z" fill="#fdfdfd" stroke-width="1"/><path d="M3 27C9 22.500 21.500 22.500 27.500 27L25.500 37.500C19 36 11.500 36 5 37.500z"/><path d="M6 63C12 64.500 18.500 64.500 24.500 63L27 72C21 76 9.500 76 3.500 72z"/><path d="M2.500 28.500L4.800 38V62.500L2.500 71.500M28 28.500L25.700 38V62.500L28 71.500"/><path d="M3.500 7C2.500 13 2.500 19 3.200 26.500M27 7C28 13 28 19 27.300 26.500M8.500 3h13.500M6 8c1 6 1 12 0 17M24.500 8c-1 6-1 12 0 17" stroke="#666" stroke-width="0.500"/><path d="M0.500 30.500l-4-1.200 0.300 2zM30 30.500l4-1.200-0.300 2z" fill="#fff" stroke-width="0.600"/><path d="M2.500 82.500h25.500" stroke-width="1.400" stroke="#222"/><path d="M6.500 38.500V62M24 38.500V62M5 49.500h1.500M24 49.500h1.500M3.300 74c3 4 21 4 24 0" stroke="#888" stroke-width=".5"/></g>
<g transform="translate(613.8 815.3)" fill="none" stroke="#333" stroke-width="0.700"><path d="M3.500 2.500C6 0 24.500 0 27 2.500C29.500 5 30.300 11 30.300 20L29.800 80C29.800 83 29 84 27 84.300H3.500C1.500 84 0.700 83 0.700 80L0.200 20C0.200 11 1 5 3.500 2.500z" fill="#fdfdfd" stroke-width="1"/><path d="M3 27C9 22.500 21.500 22.500 27.500 27L25.500 37.500C19 36 11.500 36 5 37.500z"/><path d="M6 63C12 64.500 18.500 64.500 24.500 63L27 72C21 76 9.500 76 3.500 72z"/><path d="M2.500 28.500L4.800 38V62.500L2.500 71.500M28 28.500L25.700 38V62.500L28 71.500"/><path d="M3.500 7C2.500 13 2.500 19 3.200 26.500M27 7C28 13 28 19 27.300 26.500M8.500 3h13.500M6 8c1 6 1 12 0 17M24.500 8c-1 6-1 12 0 17" stroke="#666" stroke-width="0.500"/><path d="M0.500 30.500l-4-1.200 0.300 2zM30 30.500l4-1.200-0.300 2z" fill="#fff" stroke-width="0.600"/><path d="M2.500 82.500h25.500" stroke-width="1.400" stroke="#222"/><path d="M6.500 38.500V62M24 38.500V62M5 49.500h1.500M24 49.500h1.500M3.300 74c3 4 21 4 24 0" stroke="#888" stroke-width=".5"/></g>
<g transform="translate(690.3 815.3)" fill="none" stroke="#333" stroke-width="0.700"><path d="M3.500 2.500C6 0 24.500 0 27 2.500C29.500 5 30.300 11 30.300 20L29.800 80C29.800 83 29 84 27 84.300H3.500C1.500 84 0.700 83 0.700 80L0.200 20C0.200 11 1 5 3.500 2.500z" fill="#fdfdfd" stroke-width="1"/><path d="M3 27C9 22.500 21.500 22.500 27.500 27L25.500 37.500C19 36 11.500 36 5 37.500z"/><path d="M6 63C12 64.500 18.500 64.500 24.500 63L27 72C21 76 9.500 76 3.500 72z"/><path d="M2.500 28.500L4.800 38V62.500L2.500 71.500M28 28.500L25.700 38V62.500L28 71.500"/><path d="M3.500 7C2.500 13 2.500 19 3.200 26.500M27 7C28 13 28 19 27.300 26.500M8.500 3h13.500M6 8c1 6 1 12 0 17M24.500 8c-1 6-1 12 0 17" stroke="#666" stroke-width="0.500"/><path d="M0.500 30.500l-4-1.200 0.300 2zM30 30.500l4-1.200-0.300 2z" fill="#fff" stroke-width="0.600"/><path d="M2.500 82.500h25.500" stroke-width="1.400" stroke="#222"/><path d="M6.500 38.500V62M24 38.500V62M5 49.500h1.500M24 49.500h1.500M3.300 74c3 4 21 4 24 0" stroke="#888" stroke-width=".5"/></g>
<g transform="translate(888 815.3)" fill="none" stroke="#333" stroke-width="0.700"><path d="M3.500 2.500C6 0 24.500 0 27 2.500C29.500 5 30.300 11 30.300 20L29.800 80C29.800 83 29 84 27 84.300H3.500C1.500 84 0.700 83 0.700 80L0.200 20C0.200 11 1 5 3.500 2.500z" fill="#fdfdfd" stroke-width="1"/><path d="M3 27C9 22.500 21.500 22.500 27.500 27L25.500 37.500C19 36 11.500 36 5 37.500z"/><path d="M6 63C12 64.500 18.500 64.500 24.500 63L27 72C21 76 9.500 76 3.500 72z"/><path d="M2.500 28.500L4.800 38V62.500L2.500 71.500M28 28.500L25.700 38V62.500L28 71.500"/><path d="M3.500 7C2.500 13 2.500 19 3.200 26.500M27 7C28 13 28 19 27.300 26.500M8.500 3h13.500M6 8c1 6 1 12 0 17M24.500 8c-1 6-1 12 0 17" stroke="#666" stroke-width="0.500"/><path d="M0.500 30.500l-4-1.200 0.300 2zM30 30.500l4-1.200-0.300 2z" fill="#fff" stroke-width="0.600"/><path d="M2.500 82.500h25.500" stroke-width="1.400" stroke="#222"/><path d="M6.500 38.500V62M24 38.500V62M5 49.500h1.500M24 49.500h1.500M3.300 74c3 4 21 4 24 0" stroke="#888" stroke-width=".5"/></g>
<g transform="translate(966.8 815.3)" fill="none" stroke="#333" stroke-width="0.700"><path d="M3.500 2.500C6 0 24.500 0 27 2.500C29.500 5 30.300 11 30.300 20L29.800 80C29.800 83 29 84 27 84.300H3.500C1.500 84 0.700 83 0.700 80L0.200 20C0.200 11 1 5 3.500 2.500z" fill="#fdfdfd" stroke-width="1"/><path d="M3 27C9 22.500 21.500 22.500 27.500 27L25.500 37.500C19 36 11.500 36 5 37.500z"/><path d="M6 63C12 64.500 18.500 64.500 24.500 63L27 72C21 76 9.500 76 3.500 72z"/><path d="M2.500 28.500L4.800 38V62.500L2.500 71.500M28 28.500L25.700 38V62.500L28 71.500"/><path d="M3.500 7C2.500 13 2.500 19 3.200 26.500M27 7C28 13 28 19 27.300 26.500M8.500 3h13.500M6 8c1 6 1 12 0 17M24.500 8c-1 6-1 12 0 17" stroke="#666" stroke-width="0.500"/><path d="M0.500 30.500l-4-1.200 0.300 2zM30 30.500l4-1.200-0.300 2z" fill="#fff" stroke-width="0.600"/><path d="M2.500 82.500h25.500" stroke-width="1.400" stroke="#222"/><path d="M6.500 38.500V62M24 38.500V62M5 49.500h1.500M24 49.500h1.500M3.300 74c3 4 21 4 24 0" stroke="#888" stroke-width=".5"/></g>
<g transform="translate(1023.8 815.3)" fill="none" stroke="#333" stroke-width="0.700"><path d="M3.500 2.500C6 0 24.500 0 27 2.500C29.500 5 30.300 11 30.300 20L29.800 80C29.800 83 29 84 27 84.300H3.500C1.500 84 0.700 83 0.700 80L0.200 20C0.200 11 1 5 3.500 2.500z" fill="#fdfdfd" stroke-width="1"/><path d="M3 27C9 22.500 21.500 22.500 27.500 27L25.500 37.500C19 36 11.500 36 5 37.500z"/><path d="M6 63C12 64.500 18.500 64.500 24.500 63L27 72C21 76 9.500 76 3.500 72z"/><path d="M2.500 28.500L4.800 38V62.500L2.500 71.500M28 28.500L25.700 38V62.500L28 71.500"/><path d="M3.500 7C2.500 13 2.500 19 3.200 26.500M27 7C28 13 28 19 27.300 26.500M8.500 3h13.500M6 8c1 6 1 12 0 17M24.500 8c-1 6-1 12 0 17" stroke="#666" stroke-width="0.500"/><path d="M0.500 30.500l-4-1.200 0.300 2zM30 30.500l4-1.200-0.300 2z" fill="#fff" stroke-width="0.600"/><path d="M2.500 82.500h25.500" stroke-width="1.400" stroke="#222"/><path d="M6.500 38.500V62M24 38.500V62M5 49.500h1.500M24 49.500h1.500M3.300 74c3 4 21 4 24 0" stroke="#888" stroke-width=".5"/></g>
<rect x="533.7" y="894.6" width="10" height="9.4" fill="#000"/>
<rect x="661" y="894.6" width="10" height="9.4" fill="#000"/>
<rect x="741" y="894.6" width="10" height="9.4" fill="#000"/>
<rect x="854" y="894.6" width="10" height="9.4" fill="#000"/>
<rect x="934" y="894.6" width="10" height="9.4" fill="#000"/></g>
<g><text x="603" y="248" font-size="3.7" text-anchor="middle" fill="#3a3a3a" font-family="Liberation Sans, Noto Sans CJK SC, sans-serif">户外餐区</text>
<text x="603" y="252" font-size="3.7" text-anchor="middle" fill="#4a4a4a" font-family="Liberation Sans, sans-serif">Outdoor dining area</text>
<text x="745" y="295" font-size="3.7" text-anchor="middle" fill="#3a3a3a" font-family="Liberation Sans, Noto Sans CJK SC, sans-serif">下沉式卡座</text>
<text x="745" y="299" font-size="3.7" text-anchor="middle" fill="#4a4a4a" font-family="Liberation Sans, sans-serif">Sunken sofa area</text>
<text x="745" y="386" font-size="3.7" text-anchor="middle" fill="#3a3a3a" font-family="Liberation Sans, Noto Sans CJK SC, sans-serif">景观花园区</text>
<text x="745" y="390" font-size="3.7" text-anchor="middle" fill="#4a4a4a" font-family="Liberation Sans, sans-serif">Private garden area</text>
<text x="966" y="291" font-size="3.7" text-anchor="middle" fill="#3a3a3a" font-family="Liberation Sans, Noto Sans CJK SC, sans-serif">室外游泳池</text>
<text x="966" y="295" font-size="3.7" text-anchor="middle" fill="#4a4a4a" font-family="Liberation Sans, sans-serif">Private pool</text>
<text x="960" y="394" font-size="3.7" text-anchor="middle" fill="#3a3a3a" font-family="Liberation Sans, Noto Sans CJK SC, sans-serif">休闲区</text>
<text x="960" y="398" font-size="3.7" text-anchor="middle" fill="#4a4a4a" font-family="Liberation Sans, sans-serif">Leisure Area</text>
<text x="591" y="384" font-size="3.4" text-anchor="middle" fill="#3a3a3a" font-family="Liberation Sans, Noto Sans CJK SC, sans-serif">旋转楼梯</text>
<text x="591" y="387.7" font-size="3.4" text-anchor="middle" fill="#4a4a4a" font-family="Liberation Sans, sans-serif">Spiral stairs</text>
<text x="602" y="551" font-size="3.4" text-anchor="middle" fill="#3a3a3a" font-family="Liberation Sans, Noto Sans CJK SC, sans-serif">酒吧区</text>
<text x="602" y="554.7" font-size="3.4" text-anchor="middle" fill="#4a4a4a" font-family="Liberation Sans, sans-serif">Bar area</text>
<text x="738" y="490" font-size="3.4" text-anchor="middle" fill="#3a3a3a" font-family="Liberation Sans, Noto Sans CJK SC, sans-serif">会客厅</text>
<text x="738" y="493.7" font-size="3.4" text-anchor="middle" fill="#4a4a4a" font-family="Liberation Sans, sans-serif">Reception room</text>
<text x="1008" y="570" font-size="3.4" text-anchor="middle" fill="#3a3a3a" font-family="Liberation Sans, Noto Sans CJK SC, sans-serif">桌球娱乐区</text>
<text x="1008" y="573.7" font-size="3.4" text-anchor="middle" fill="#4a4a4a" font-family="Liberation Sans, sans-serif">Billiards area</text>
<text x="709.5" y="699" font-size="3.4" text-anchor="middle" fill="#3a3a3a" font-family="Liberation Sans, Noto Sans CJK SC, sans-serif">艺术展廊</text>
<text x="709.5" y="702.7" font-size="3.4" text-anchor="middle" fill="#4a4a4a" font-family="Liberation Sans, sans-serif">Exhibition corridor</text>
<text x="803" y="641" font-size="3.4" text-anchor="middle" fill="#3a3a3a" font-family="Liberation Sans, Noto Sans CJK SC, sans-serif">旋转楼梯</text>
<text x="803" y="644.7" font-size="3.4" text-anchor="middle" fill="#4a4a4a" font-family="Liberation Sans, sans-serif">Spiral stairs</text>
<text x="907" y="623" font-size="3.4" text-anchor="middle" fill="#3a3a3a" font-family="Liberation Sans, Noto Sans CJK SC, sans-serif">休闲等候区</text>
<text x="907" y="626.7" font-size="3.4" text-anchor="middle" fill="#4a4a4a" font-family="Liberation Sans, sans-serif">Waiting area</text>
<text x="1020" y="617" font-size="3.4" text-anchor="middle" fill="#3a3a3a" font-family="Liberation Sans, Noto Sans CJK SC, sans-serif">棋牌区</text>
<text x="1020" y="620.7" font-size="3.4" text-anchor="middle" fill="#4a4a4a" font-family="Liberation Sans, sans-serif">Chess and card</text>
<text x="1037" y="673" font-size="3.4" text-anchor="middle" fill="#3a3a3a" font-family="Liberation Sans, Noto Sans CJK SC, sans-serif">水吧区</text>
<text x="1037" y="676.7" font-size="3.4" text-anchor="middle" fill="#4a4a4a" font-family="Liberation Sans, sans-serif">Water Bar</text>
<text x="805" y="722" font-size="3.4" text-anchor="middle" fill="#3a3a3a" font-family="Liberation Sans, Noto Sans CJK SC, sans-serif">电梯厅</text>
<text x="805" y="725.7" font-size="3.4" text-anchor="middle" fill="#4a4a4a" font-family="Liberation Sans, sans-serif">Elevator hall</text>
<text x="806" y="780" font-size="3.4" text-anchor="middle" fill="#3a3a3a" font-family="Liberation Sans, Noto Sans CJK SC, sans-serif">玄关装饰</text>
<text x="806" y="783.7" font-size="3.4" text-anchor="middle" fill="#4a4a4a" font-family="Liberation Sans, sans-serif">Foyer hardware</text>
<text x="633" y="701" font-size="3.4" text-anchor="middle" fill="#3a3a3a" font-family="Liberation Sans, Noto Sans CJK SC, sans-serif">私人接待区</text>
<text x="633" y="704.7" font-size="3.4" text-anchor="middle" fill="#4a4a4a" font-family="Liberation Sans, sans-serif">Private reception</text>
<text x="883" y="745" font-size="3.4" text-anchor="middle" fill="#3a3a3a" font-family="Liberation Sans, Noto Sans CJK SC, sans-serif">衣帽间</text>
<text x="883" y="748.7" font-size="3.4" text-anchor="middle" fill="#4a4a4a" font-family="Liberation Sans, sans-serif">Cloakroom</text>
<text x="921" y="745" font-size="3.4" text-anchor="middle" fill="#3a3a3a" font-family="Liberation Sans, Noto Sans CJK SC, sans-serif">卫生间</text>
<text x="921" y="748.7" font-size="3.4" text-anchor="middle" fill="#4a4a4a" font-family="Liberation Sans, sans-serif">Toilet</text>
<text x="900" y="700" font-size="3.4" text-anchor="middle" fill="#3a3a3a" font-family="Liberation Sans, Noto Sans CJK SC, sans-serif">卫生间</text>
<text x="900" y="703.7" font-size="3.4" text-anchor="middle" fill="#4a4a4a" font-family="Liberation Sans, sans-serif">W.C</text>
<text x="992" y="745" font-size="3.4" text-anchor="middle" fill="#3a3a3a" font-family="Liberation Sans, Noto Sans CJK SC, sans-serif">保姆房</text>
<text x="992" y="748.7" font-size="3.4" text-anchor="middle" fill="#4a4a4a" font-family="Liberation Sans, sans-serif">Nanny room</text>
<text x="1060" y="745" font-size="3.4" text-anchor="middle" fill="#3a3a3a" font-family="Liberation Sans, Noto Sans CJK SC, sans-serif">司机房</text>
<text x="1060" y="748.7" font-size="3.4" text-anchor="middle" fill="#4a4a4a" font-family="Liberation Sans, sans-serif">Driver's room</text>
<text x="903" y="794" font-size="3.4" text-anchor="middle" fill="#3a3a3a" font-family="Liberation Sans, Noto Sans CJK SC, sans-serif">工具房</text>
<text x="903" y="797.7" font-size="3.4" text-anchor="middle" fill="#4a4a4a" font-family="Liberation Sans, sans-serif">Tool storage</text>
<text x="668" y="857" font-size="3.4" text-anchor="middle" fill="#3a3a3a" font-family="Liberation Sans, Noto Sans CJK SC, sans-serif">私人车库</text>
<text x="668" y="860.7" font-size="3.4" text-anchor="middle" fill="#4a4a4a" font-family="Liberation Sans, sans-serif">Private garage</text>
<text x="800" y="857" font-size="3.4" text-anchor="middle" fill="#3a3a3a" font-family="Liberation Sans, Noto Sans CJK SC, sans-serif">入户</text>
<text x="800" y="860.7" font-size="3.4" text-anchor="middle" fill="#4a4a4a" font-family="Liberation Sans, sans-serif">FOYEL</text>
<text x="951" y="857" font-size="3.4" text-anchor="middle" fill="#3a3a3a" font-family="Liberation Sans, Noto Sans CJK SC, sans-serif">私人车库</text>
<text x="951" y="860.7" font-size="3.4" text-anchor="middle" fill="#4a4a4a" font-family="Liberation Sans, sans-serif">Private garage</text>
<path d="M533.700 220.700H1080V908.700" fill="none" stroke="#555" stroke-width="0.800"/>
<rect x="533.5" y="220.5" width="4.5" height="688.2" fill="#7d7d7d" stroke="#444" stroke-width="0.6"/>
<path d="M534 222.600H1080" stroke="#828282" stroke-width="4.200"/>
<path d="M545 222.700m-1.200 0a1.200 1.200 0 1 0 2.400 0a1.200 1.200 0 1 0 -2.400 0M562.4 222.700m-1.200 0a1.200 1.200 0 1 0 2.400 0a1.200 1.200 0 1 0 -2.400 0M579.8 222.700m-1.200 0a1.200 1.200 0 1 0 2.400 0a1.200 1.200 0 1 0 -2.400 0M597.2 222.700m-1.200 0a1.200 1.200 0 1 0 2.400 0a1.200 1.200 0 1 0 -2.400 0M614.6 222.700m-1.200 0a1.200 1.200 0 1 0 2.400 0a1.200 1.200 0 1 0 -2.400 0M632 222.700m-1.200 0a1.200 1.200 0 1 0 2.400 0a1.200 1.200 0 1 0 -2.400 0M649.4 222.700m-1.200 0a1.200 1.200 0 1 0 2.400 0a1.200 1.200 0 1 0 -2.400 0M666.8 222.700m-1.200 0a1.200 1.200 0 1 0 2.400 0a1.200 1.200 0 1 0 -2.400 0M684.2 222.700m-1.200 0a1.200 1.200 0 1 0 2.400 0a1.200 1.200 0 1 0 -2.400 0M701.6 222.700m-1.200 0a1.200 1.200 0 1 0 2.400 0a1.200 1.200 0 1 0 -2.400 0M719 222.700m-1.200 0a1.200 1.200 0 1 0 2.400 0a1.200 1.200 0 1 0 -2.400 0M736.4 222.700m-1.200 0a1.200 1.200 0 1 0 2.400 0a1.200 1.200 0 1 0 -2.400 0M753.8 222.700m-1.200 0a1.200 1.200 0 1 0 2.400 0a1.200 1.200 0 1 0 -2.400 0M771.2 222.700m-1.200 0a1.200 1.200 0 1 0 2.400 0a1.200 1.200 0 1 0 -2.400 0M788.6 222.700m-1.200 0a1.200 1.200 0 1 0 2.400 0a1.200 1.200 0 1 0 -2.400 0M806 222.700m-1.200 0a1.200 1.200 0 1 0 2.400 0a1.200 1.200 0 1 0 -2.400 0M823.4 222.700m-1.200 0a1.200 1.200 0 1 0 2.400 0a1.200 1.200 0 1 0 -2.400 0M840.8 222.700m-1.200 0a1.200 1.200 0 1 0 2.400 0a1.200 1.200 0 1 0 -2.400 0M858.2 222.700m-1.200 0a1.200 1.200 0 1 0 2.400 0a1.200 1.200 0 1 0 -2.400 0M875.6 222.700m-1.200 0a1.200 1.200 0 1 0 2.400 0a1.200 1.200 0 1 0 -2.400 0M893 222.700m-1.200 0a1.200 1.200 0 1 0 2.400 0a1.200 1.200 0 1 0 -2.400 0M910.4 222.700m-1.200 0a1.200 1.200 0 1 0 2.400 0a1.200 1.200 0 1 0 -2.400 0M927.8 222.700m-1.200 0a1.200 1.200 0 1 0 2.400 0a1.200 1.200 0 1 0 -2.400 0M945.2 222.700m-1.200 0a1.200 1.200 0 1 0 2.400 0a1.200 1.200 0 1 0 -2.400 0M962.6 222.700m-1.200 0a1.200 1.200 0 1 0 2.400 0a1.200 1.200 0 1 0 -2.400 0M980 222.700m-1.200 0a1.200 1.200 0 1 0 2.400 0a1.200 1.200 0 1 0 -2.400 0M997.4 222.700m-1.200 0a1.200 1.200 0 1 0 2.400 0a1.200 1.200 0 1 0 -2.400 0M1014.8 222.700m-1.200 0a1.200 1.200 0 1 0 2.400 0a1.200 1.200 0 1 0 -2.400 0M1032.2 222.700m-1.200 0a1.200 1.200 0 1 0 2.400 0a1.200 1.200 0 1 0 -2.400 0M1049.6 222.700m-1.200 0a1.200 1.200 0 1 0 2.400 0a1.200 1.200 0 1 0 -2.400 0M1067 222.700m-1.200 0a1.200 1.200 0 1 0 2.400 0a1.200 1.200 0 1 0 -2.400 0" fill="#fff" stroke="#444" stroke-width="0.400"/>
<path d="M538 908V225H1076.500V908.700" fill="none" stroke="#1a1a1a" stroke-width="1.900"/>
<path d="M538 680V908.700" stroke="#1a1a1a" stroke-width="1.500"/>
<rect x="1077.5" y="226" width="2.5" height="682.7" fill="#6a6a6a" stroke="#333" stroke-width="0.6"/>
<rect x="533.7" y="894.6" width="9.8" height="9.9" fill="#000"/>
<path d="M447.700 246.600L432.400 371L450.400 310.800L475.300 367.400z" fill="#d6d6d6" stroke="#2a2a2a" stroke-width="1.200" stroke-dasharray="5 1.800"/>
<text x="431" y="235.500" font-size="17" fill="#fff" stroke="#3a3a3a" stroke-width="0.600" font-family="Liberation Sans, sans-serif" textLength="38" lengthAdjust="spacingAndGlyphs">North</text>
<text x="543" y="179" font-size="35.500" fill="#111" font-family="Liberation Serif, serif" textLength="33" lengthAdjust="spacingAndGlyphs">B1</text></g>
<circle cx="567.5" cy="231" r="46.6" fill="#000" opacity=".21" filter="url(#tsh)"/><circle cx="554.5" cy="230" r="46.6" fill="#6b8550" opacity=".88" filter="url(#leaf)"/><circle cx="1094.5" cy="230.5" r="59.7" fill="#000" opacity=".21" filter="url(#tsh)"/><circle cx="1071.5" cy="229.5" r="59.7" fill="#6b8550" opacity=".88" filter="url(#leaf)"/>
<path d="M538 225V330M538 225H600M1076.500 225V330M1010 225H1076.500" stroke="#222" stroke-width="1.300" opacity=".8" fill="none"/>
</g></svg>
<svg style="left:0;top:0" width="1800" height="965" fill="none" stroke="#9a9a9a" stroke-width="1"><path d="M367.500 102v6.500h2.500M1166 942.500h-2.500v6.500M1166.500 519.500h-3v13h3M367 519.500h3v13h-3M1163 102.500v5h3.500M370 948.500v-5h-3"/><path d="M366.500 102V949M1167 102V949" stroke="#2a2a2a" stroke-dasharray="4 3"/></svg>
<!-- scrollbars / status -->
<div class="a" style="left:1477px;top:85px;width:16px;height:880px;background:#4a4a4a"></div>
<div class="a" style="left:1478px;top:368px;width:13px;height:300px;background:#696969"></div>
<div class="a" style="left:37px;top:949px;width:1440px;height:16px;background:#4a4a4a"></div>
<div class="a" style="left:620px;top:951px;width:491px;height:12px;background:#696969"></div>
<div class="a" style="left:37px;top:949px;width:47px;height:16px;background:#535353"></div>
<div class="a" style="left:85px;top:949px;width:170px;height:16px;background:#474747"></div>
<div class="t" style="left:42px;top:949px;font-size:11.500px;color:#ededed">16.67%</div>
<div class="t" style="left:115px;top:949px;font-size:11.500px;color:#d2d2d2;letter-spacing:-0.300px">文档:80.7M/533.1M</div>
<svg style="left:240px;top:949px" width="40" height="16" fill="none"><path d="M6 4l3.500 4-3.500 4" stroke="#d0d0d0" stroke-width="1.300"/><path d="M27.500 4.500l-3 3.500 3 3.500" stroke="#7e7e7e" stroke-width="1.300"/></svg>
<svg style="left:1477px;top:85px" width="16" height="880" fill="none"><path d="M4.500 11.500l3.500-3.500 3.500 3.500" stroke="#7e7e7e" stroke-width="1.300"/><path d="M4.500 853.500l3.500 3.500 3.500-3.500" stroke="#8e8e8e" stroke-width="1.300"/></svg>
<svg style="left:1460px;top:949px" width="16" height="16" fill="none"><path d="M6.500 4.500l3 3.500-3 3.500" stroke="#8e8e8e" stroke-width="1.300"/></svg>

<div class="a" style="left:1493px;top:59px;width:307px;height:906px;background:#424242"></div>
<div class="a" style="left:1493px;top:59px;width:307px;height:11px;background:#484848"></div>
<!-- icon strip -->
<div class="a" style="left:1495px;top:70px;width:35px;height:895px;background:#535353"></div>
<div class="a" style="left:1495px;top:186px;width:35px;height:2px;background:#434343"></div>
<div class="a" style="left:1495px;top:251px;width:35px;height:2px;background:#434343"></div>
<div class="a" style="left:1495px;top:316px;width:35px;height:1px;background:#434343"></div>
<svg style="left:1495px;top:59px" width="35" height="260" viewBox="1495 59 35 260" fill="none" stroke="#dcdcdc" stroke-width="1.400">
 <path d="M1517 62.500l3 3-3 3zM1521.500 62.500l3 3-3 3z" fill="#c0c0c0" stroke="none" transform="translate(3042,0) scale(-1,1)"/>
 <path d="M1505 76h15M1505 191h15M1505 256h15" stroke="#474747" stroke-width="3" stroke-dasharray="1 1"/>
 <rect x="1504" y="86" width="20" height="15" fill="#3c3c3c" stroke="none"/>
 <path d="M1506 85v11h5M1521 85h-6v5.500h5.500v5.500h-6" stroke="#e4e4e4" stroke-width="2.400"/>
 <rect x="1507" y="109" width="4" height="3.500" stroke-width="1"/><rect x="1507" y="114.500" width="4" height="3.500" stroke-width="1"/><rect x="1507" y="120" width="4" height="3.500" fill="#dcdcdc" stroke-width="1"/>
 <path d="M1515 124c4-2 5-7 2-12M1513.500 114l3.500-3 2 4" stroke-width="1.700"/>
 <path d="M1507 138l4-2 4 2v5l-4 2-4-2zM1507 138l4 2 4-2M1511 140v5" stroke-width="1.100"/><rect x="1517" y="136" width="4" height="4" fill="#dcdcdc" stroke="none"/><rect x="1517" y="141" width="4" height="4" fill="#dcdcdc" stroke="none"/><rect x="1507" y="147" width="14" height="4" fill="#dcdcdc" stroke="none"/>
 <path d="M1506 166l6-3 6 12-6 3zM1515 168h7v10h-8M1506 163l16 14" stroke-width="1.200"/>
 <path d="M1509 208h9v9h-9z" fill="#dcdcdc" stroke="none"/><path d="M1511 208v-6M1514 208v-8M1517 208v-5" stroke-width="1.500"/><circle cx="1511" cy="201" r="1.200" fill="#dcdcdc"/><circle cx="1517" cy="202" r="1.200" fill="#dcdcdc"/>
 <path d="M1507 232h14M1507 238h9" stroke-width="1.600"/><circle cx="1511" cy="232" r="2.300" fill="#dcdcdc" stroke="none"/><path d="M1516 236l5-2v8z" fill="#dcdcdc" stroke="none"/><circle cx="1520" cy="238" r="3" fill="#dcdcdc" stroke="none"/>
 <path d="M1520.500 267v15" stroke-width="1.100"/>
 <path d="M1512 293h8.500M1516.500 293v14.500M1519.500 293v14.500" stroke-width="1.500"/><path d="M1513 292.300a4.200 4.200 0 0 0 0 8.400h3.500v-8.400z" fill="#dcdcdc" stroke="none"/>
</svg>
<div class="t" style="left:1507px;top:265px;font-size:17px;line-height:18px;height:18px;color:#e2e2e2">A</div>
<!-- far right strip -->
<div class="a" style="left:1765px;top:70px;width:35px;height:895px;background:#535353"></div>
<div class="a" style="left:1765px;top:108px;width:35px;height:2px;background:#434343"></div>
<svg style="left:1765px;top:59px" width="35" height="50" viewBox="1765 59 35 50" fill="none" stroke="#c4c4c4">
 <path d="M1791 62.500l-3 3 3 3zM1795.500 62.500l-3 3 3 3z" fill="#c0c0c0" stroke="none"/>
 <path d="M1775 76h15" stroke="#474747" stroke-width="3" stroke-dasharray="1 1"/>
 <ellipse cx="1779.500" cy="93" rx="6" ry="5" stroke-width="1.700"/><ellipse cx="1785" cy="91.500" rx="5.500" ry="4.800" stroke-width="1.700"/><path d="M1777 94c2-3 4-3 6-1.500s4 1 5-1" stroke-width="1.300"/>
</svg>
<!-- colour panel -->
<div class="a" style="left:1533px;top:70px;width:229px;height:27px;background:#424242"></div>
<div class="a" style="left:1533px;top:97px;width:229px;height:353px;background:#535353"></div>
<div class="a" style="left:1533px;top:70px;width:39px;height:28px;background:#535353"></div>
<div class="a" style="left:1573px;top:70px;width:39px;height:26px;background:#474747"></div>
<div class="t" style="left:1541px;top:75px;color:#f0f0f0">颜色</div>
<div class="t dim" style="left:1581px;top:75px">色板</div>
<svg style="left:1533px;top:59px" width="229" height="40" viewBox="1533 59 229 40"><path d="M1749 62.500l3 3-3 3zM1753.500 62.500l3 3-3 3z" fill="#c0c0c0"/><path d="M1746 79.500h10M1746 82.500h10M1746 85.500h10" stroke="#9c9c9c" stroke-width="1.300"/></svg>
<div class="a" style="left:1552px;top:116px;width:17px;height:17px;background:#e8e4e0;border:1px solid #3a3a3a;box-sizing:border-box"></div>
<div class="a" style="left:1541px;top:106px;width:19px;height:19px;background:#ffffff;border:1px solid #3a3a3a;box-sizing:border-box;box-shadow:0 0 0 1px #cfcfcf"></div>
<div class="a" style="left:1575px;top:102px;width:138px;height:341px;background:linear-gradient(to top,#000,rgba(0,0,0,0)),linear-gradient(to right,#fff,#ff0000)"></div>
<div class="a" style="left:1729px;top:102px;width:18px;height:341px;background:linear-gradient(to bottom,#ff0000 0%,#ff00ff 16.600%,#0000ff 33.300%,#00ffff 50%,#00ff00 66.600%,#ffff00 83.300%,#ff0000 100%)"></div>
<svg style="left:1570px;top:96px" width="160" height="354" viewBox="1570 96 160 354"><circle cx="1576" cy="103" r="4" fill="none" stroke="#fff" stroke-width="1.200"/><circle cx="1576" cy="103" r="5" fill="none" stroke="#333" stroke-width="0.800"/><path d="M1720 438.500l6 3.500-6 3.500z" fill="#e8e8e8"/></svg>
<!-- adjustments panel -->
<div class="a" style="left:1533px;top:451px;width:229px;height:26px;background:#424242"></div>
<div class="a" style="left:1533px;top:477px;width:229px;height:107px;background:#535353"></div>
<div class="a" style="left:1533px;top:451px;width:39px;height:27px;background:#535353"></div>
<div class="a" style="left:1573px;top:451px;width:39px;height:25px;background:#474747"></div>
<div class="t" style="left:1541px;top:456px;color:#f0f0f0">调整</div>
<div class="t dim" style="left:1581px;top:456px">样式</div>
<div class="t" style="left:1541px;top:484px;color:#d8d8d8">添加调整</div>
<svg style="left:1533px;top:451px" width="229" height="132" viewBox="1533 451 229 132" fill="none" stroke="#d8d8d8" stroke-width="1.200">
 <path d="M1746 460.500h10M1746 463.500h10M1746 466.500h10" stroke="#b4b4b4" stroke-width="1.300"/>
 <circle cx="1585" cy="515" r="4"/><path d="M1585 511a4 4 0 0 1 0 8z" fill="#d8d8d8"/><path d="M1585 508v-2M1585 522v2M1578 515h-2M1592 515h2M1580 510l-1.500-1.500M1590 510l1.500-1.500M1580 520l-1.500 1.500M1590 520l1.500 1.500"/>
 <path d="M1600 520v-5l2-3 1 2 1-5 2 4 1-3 2 5 1-4 2 3 1-2 2 3v5z" fill="#d8d8d8" stroke-width="0.800"/>
 <rect x="1624.500" y="508.500" width="13" height="12"/><path d="M1624.500 512.500h13M1624.500 516.500h13M1628.500 508.500v12M1633 508.500v12M1624.500 520.500c6 0 9-5 13-12" stroke-width="1"/>
 <rect x="1647.500" y="508.500" width="13" height="12"/><path d="M1647.500 520.500l13-12v12z" fill="#d8d8d8" stroke="none"/><path d="M1649.500 512h4M1651.500 510v4M1655 518h4" stroke-width="1"/>
 <path d="M1670 509h12l-6 11z"/><path d="M1673 511.500h6l-3 5.500z" fill="#d8d8d8" stroke="none"/>
 <rect x="1568.500" y="534.500" width="13" height="11"/><path d="M1568.500 538h13M1572.500 534.500v3.500M1577 534.500v3.500"/><rect x="1569" y="541" width="12" height="4" fill="#d8d8d8" stroke="none"/>
 <path d="M1597 534v11M1591 537h12M1593 545.500h8M1591 537l-2.500 5h5zM1603 537l-2.500 5h5z" stroke-width="1.100"/>
 <rect x="1613.500" y="534.500" width="13" height="11"/><rect x="1620" y="534.500" width="6.500" height="11" fill="#d8d8d8" stroke="none"/>
 <path d="M1636 537h3l1-1.500h4l1 1.500h3v8h-12z" fill="#d8d8d8" stroke="none"/><circle cx="1642" cy="541" r="2.200" fill="#535353" stroke="none"/><circle cx="1647.500" cy="545" r="2.500" fill="#535353" stroke="#d8d8d8" stroke-width="1.300"/>
 <circle cx="1664" cy="538" r="4" fill="#bdbdbd" stroke="none"/><circle cx="1661" cy="543" r="4" fill="#d8d8d8" stroke="none"/><circle cx="1667" cy="543" r="4" fill="#a4a4a4" stroke="none"/>
 <rect x="1681.500" y="534.500" width="13" height="11"/><path d="M1681.500 538h13M1681.500 541.500h13M1686 534.500v11M1690 534.500v11"/>
 <rect x="1579.500" y="559.500" width="13" height="11"/><path d="M1581 569l10-8M1583 563c2-1 5 0 6 4" fill="none"/><ellipse cx="1586" cy="565" rx="4" ry="2.500" fill="#d8d8d8" stroke="none" transform="rotate(-35 1586 565)"/>
 <rect x="1602.500" y="559.500" width="13" height="11"/><path d="M1603 570l12-10v4l-8 6.500zM1603 565l6-5h-6z" fill="#d8d8d8" stroke="none"/>
 <rect x="1625.500" y="559.500" width="13" height="11"/><path d="M1626 570v-3l3-3 2 2 3-4 2 2 2.500-3v9z" fill="#d8d8d8" stroke="none"/>
 <rect x="1647.500" y="559.500" width="13" height="11"/><path d="M1647.500 559.500l6.500 5.500 6.500-5.500v11l-6.500-5.500-6.500 5.500z" fill="#d8d8d8" stroke="none"/>
 <rect x="1670.500" y="559.500" width="13" height="11" fill="url(#ag)"/>
 <defs><linearGradient id="ag" x1="0" x2="1"><stop offset="0" stop-color="#4a4a4a"/><stop offset="1" stop-color="#e8e8e8"/></linearGradient></defs>
</svg>
<!-- layers panel -->
<div class="a" style="left:1533px;top:586px;width:229px;height:26px;background:#424242"></div>
<div class="a" style="left:1533px;top:612px;width:229px;height:353px;background:#535353"></div>
<div class="a" style="left:1533px;top:586px;width:39px;height:27px;background:#535353"></div>
<div class="a" style="left:1573px;top:586px;width:40px;height:25px;background:#474747"></div>
<div class="a" style="left:1614px;top:586px;width:40px;height:25px;background:#474747"></div>
<div class="t" style="left:1541px;top:591px;color:#f0f0f0">图层</div>
<div class="t dim" style="left:1581px;top:591px">通道</div>
<div class="t dim" style="left:1622px;top:591px">路径</div>
<div class="a" style="left:1537px;top:620px;width:80px;height:18px;background:#454545;border:1px solid #4d4d4d;box-sizing:border-box"></div>
<div class="a" style="left:1537px;top:645px;width:109px;height:18px;background:#454545;border:1px solid #4d4d4d;box-sizing:border-box"></div>
<div class="t" style="left:1557px;top:621px;font-size:11.500px;color:#e8e8e8">类型</div>
<div class="t" style="left:1545px;top:646px;font-size:11.500px;color:#e8e8e8">正常</div>
<div class="t" style="left:1654px;top:646px;font-size:11.500px;color:#cfcfcf">不透明度:</div>
<div class="t" style="left:1708px;top:646px;font-size:11px;color:#ededed">95%</div>
<div class="t" style="left:1539px;top:671px;font-size:11.500px;color:#cfcfcf">锁定:</div>
<div class="t" style="left:1677px;top:671px;font-size:11.500px;color:#cfcfcf">填充:</div>
<div class="t" style="left:1709px;top:671px;font-size:11px;color:#ededed">100%</div>
<svg style="left:1533px;top:612px" width="229" height="84" viewBox="1533 612 229 84" fill="none" stroke="#dcdcdc" stroke-width="1.200">
 <path d="M1746 595.500h10M1746 598.500h10M1746 601.500h10" stroke="#b4b4b4" stroke-width="1.300"/>
 <circle cx="1547" cy="627.500" r="3" stroke-width="1.400"/><path d="M1545 630l-3 3.500" stroke-width="1.800"/>
 <path d="M1607 627l3.500 3.500 3.500-3.500M1636 652l3.500 3.500 3.500-3.500M1748.500 652l3.500 3.500 3.500-3.500M1748.500 677l3.500 3.500 3.500-3.500" stroke="#c4c4c4"/>
 <path d="M1706 662.500h52M1706 687.500h52" stroke="#6c6c6c" stroke-width="1"/>
 <rect x="1631.500" y="623.500" width="11" height="9"/><path d="M1633 631l3-3.500 2 2 1.500-1.500 2 3z" fill="#dcdcdc" stroke="none"/>
 <circle cx="1660" cy="628.500" r="4.500"/><path d="M1657 632l6.500-6.500a4.500 4.500 0 0 1-6.500 6.500z" fill="#dcdcdc" stroke="none"/>
 <rect x="1701.500" y="624.500" width="9" height="8"/><rect x="1700" y="623" width="3" height="3" fill="#dcdcdc" stroke="none"/><rect x="1709" y="623" width="3" height="3" fill="#dcdcdc" stroke="none"/><rect x="1700" y="631" width="3" height="3" fill="#dcdcdc" stroke="none"/><rect x="1709" y="631" width="3" height="3" fill="#dcdcdc" stroke="none"/>
 <path d="M1727.500 623.500h4l3 3v7h-5" /><rect x="1724" y="628" width="6" height="6" fill="#dcdcdc" stroke="none"/>
 <rect x="1750.500" y="621" width="7" height="15" rx="3.500" fill="#3e3e3e" stroke="none"/><circle cx="1754" cy="625" r="3.600" fill="#e4e4e4" stroke="none"/>
 <path d="M1574.500 674.500h10v10h-10z" fill="#dcdcdc" stroke="none"/><path d="M1577.500 675h3.500v3h-3.500zM1581 678h3v3h-3zM1575 678h2.500v3h-2.500zM1577.500 681h3.500v3h-3.500z" fill="#535353" stroke="none"/>
 <path d="M1605 673l-6 7" stroke-width="2"/><path d="M1596 685c2 0 3.500-1 3.500-3l-1.500-1c-1.500 0-1.500 2-2 4z" fill="#dcdcdc" stroke-width="0.800"/>
 <path d="M1620 673.500v12M1614 679.500h12M1620 673l-2 2.500h4zM1620 686l-2-2.500h4zM1613.500 679.500l2.500-2v4zM1626.500 679.500l-2.500-2v4z" fill="#dcdcdc" stroke-width="1.100"/>
 <path d="M1637.500 673v10h10M1634.500 676.500h10v10" stroke-width="1.300"/>
 <rect x="1657.500" y="678.500" width="9" height="7" fill="#dcdcdc"/><path d="M1659.500 678v-2a2.500 2.500 0 0 1 5 0v2" stroke-width="1.400"/>
</svg>
<div class="t" style="left:1680px;top:619px;font-family:'Liberation Serif',serif;font-weight:bold;font-size:14px;color:#e2e2e2">T</div>
<div class="a" style="left:1533px;top:693px;width:215px;height:248px;background:#535353;overflow:hidden">
<div class="a" style="left:0;top:36.0px;width:215px;height:1px;background:#474747"></div>
<div class="a" style="left:33px;top:4.0px;width:26px;height:29px;background-color:#fff;background-image:linear-gradient(45deg,#ccc 25%,transparent 25%,transparent 75%,#ccc 75%),linear-gradient(45deg,#ccc 25%,transparent 25%,transparent 75%,#ccc 75%);background-size:8px 8px;background-position:0 0,4px 4px;"></div>
<svg style="left:7px;top:13.0px" width="16" height="10" viewBox="0 0 16 10"><path d="M0.500 5c3-5.500 12-5.500 15 0c-3 5.500-12 5.500-15 0z" fill="#dcdcdc"/><circle cx="8" cy="5" r="2.800" fill="#535353"/><circle cx="8" cy="5" r="1.400" fill="#dcdcdc"/></svg>
<div class="t" style="left:69px;top:10.0px;font-size:11.500px;color:#e8e8e8">线稿</div>
<div class="a" style="left:0;top:37.1px;width:215px;height:36px;background:#6b6b6b"></div>
<div class="a" style="left:0;top:72.7px;width:215px;height:1px;background:#474747"></div>
<div class="a" style="left:33px;top:40.6px;width:26px;height:29px;background-color:#fff;background-image:linear-gradient(45deg,#ccc 25%,transparent 25%,transparent 75%,#ccc 75%),linear-gradient(45deg,#ccc 25%,transparent 25%,transparent 75%,#ccc 75%);background-size:8px 8px;background-position:0 0,4px 4px;box-shadow:0 0 0 1px #6b6b6b,0 0 0 2.500px #fff;"></div>
<div class="a" style="left:36px;top:37.1px;width:20px;height:35.500px;background:#6b6b6b"></div>
<div class="a" style="left:29px;top:45.6px;width:40px;height:19px;background:#6b6b6b"></div>
<div class="a" style="left:33px;top:40.6px;width:26px;height:29px;background-color:#fff;background-image:linear-gradient(45deg,#ccc 25%,transparent 25%,transparent 75%,#ccc 75%),linear-gradient(45deg,#ccc 25%,transparent 25%,transparent 75%,#ccc 75%);background-size:8px 8px;background-position:0 0,4px 4px"></div>
<svg style="left:7px;top:49.6px" width="16" height="10" viewBox="0 0 16 10"><path d="M0.500 5c3-5.500 12-5.500 15 0c-3 5.500-12 5.500-15 0z" fill="#dcdcdc"/><circle cx="8" cy="5" r="2.800" fill="#535353"/><circle cx="8" cy="5" r="1.400" fill="#dcdcdc"/></svg>
<div class="t" style="left:69px;top:46.6px;font-size:11.500px;color:#e8e8e8">背景 拷贝 3</div>
<div class="a" style="left:0;top:109.3px;width:215px;height:1px;background:#474747"></div>
<div class="a" style="left:33px;top:77.3px;width:26px;height:29px;background-color:#fff;background-image:linear-gradient(45deg,#ccc 25%,transparent 25%,transparent 75%,#ccc 75%),linear-gradient(45deg,#ccc 25%,transparent 25%,transparent 75%,#ccc 75%);background-size:8px 8px;background-position:0 0,4px 4px;"></div>
<svg style="left:7px;top:86.3px" width="16" height="10" viewBox="0 0 16 10"><path d="M0.500 5c3-5.500 12-5.500 15 0c-3 5.500-12 5.500-15 0z" fill="#dcdcdc"/><circle cx="8" cy="5" r="2.800" fill="#535353"/><circle cx="8" cy="5" r="1.400" fill="#dcdcdc"/></svg>
<div class="t" style="left:69px;top:83.3px;font-size:11.500px;color:#e8e8e8">背景 拷贝 2</div>
<div class="a" style="left:0;top:145.9px;width:215px;height:1px;background:#474747"></div>
<div class="a" style="left:33px;top:113.9px;width:26px;height:29px;background-color:#fff;background-image:linear-gradient(45deg,#ccc 25%,transparent 25%,transparent 75%,#ccc 75%),linear-gradient(45deg,#ccc 25%,transparent 25%,transparent 75%,#ccc 75%);background-size:8px 8px;background-position:0 0,4px 4px;"></div>
<svg style="left:7px;top:122.9px" width="16" height="10" viewBox="0 0 16 10"><path d="M0.500 5c3-5.500 12-5.500 15 0c-3 5.500-12 5.500-15 0z" fill="#dcdcdc"/><circle cx="8" cy="5" r="2.800" fill="#535353"/><circle cx="8" cy="5" r="1.400" fill="#dcdcdc"/></svg>
<div class="t" style="left:69px;top:119.9px;font-size:11.500px;color:#e8e8e8">墙体</div>
<div class="a" style="left:0;top:182.6px;width:215px;height:1px;background:#474747"></div>
<div class="a" style="left:33px;top:150.6px;width:26px;height:29px;background-color:#fff;background-image:linear-gradient(45deg,#ccc 25%,transparent 25%,transparent 75%,#ccc 75%),linear-gradient(45deg,#ccc 25%,transparent 25%,transparent 75%,#ccc 75%);background-size:8px 8px;background-position:0 0,4px 4px;"></div>
<svg style="left:7px;top:159.6px" width="16" height="10" viewBox="0 0 16 10"><path d="M0.500 5c3-5.500 12-5.500 15 0c-3 5.500-12 5.500-15 0z" fill="#dcdcdc"/><circle cx="8" cy="5" r="2.800" fill="#535353"/><circle cx="8" cy="5" r="1.400" fill="#dcdcdc"/></svg>
<div class="t" style="left:69px;top:156.6px;font-size:11.500px;color:#e8e8e8;letter-spacing:-0.350px">墙体_Shadow[315°]</div>
<div class="a" style="left:0;top:219.2px;width:215px;height:1px;background:#474747"></div>
<div class="a" style="left:33px;top:187.2px;width:26px;height:29px;background-color:#fff;background-image:linear-gradient(45deg,#ccc 25%,transparent 25%,transparent 75%,#ccc 75%),linear-gradient(45deg,#ccc 25%,transparent 25%,transparent 75%,#ccc 75%);background-size:8px 8px;background-position:0 0,4px 4px;"></div>
<svg style="left:7px;top:196.2px" width="16" height="10" viewBox="0 0 16 10"><path d="M0.500 5c3-5.500 12-5.500 15 0c-3 5.500-12 5.500-15 0z" fill="#dcdcdc"/><circle cx="8" cy="5" r="2.800" fill="#535353"/><circle cx="8" cy="5" r="1.400" fill="#dcdcdc"/></svg>
<div class="t" style="left:69px;top:193.2px;font-size:11.500px;color:#e8e8e8;letter-spacing:-0.450px">墙体_Shadow[315°]_Sha...</div>
<div class="a" style="left:0;top:255.9px;width:215px;height:1px;background:#474747"></div>
<div class="a" style="left:33px;top:223.9px;width:26px;height:29px;background-color:#fff;background-image:linear-gradient(45deg,#ccc 25%,transparent 25%,transparent 75%,#ccc 75%),linear-gradient(45deg,#ccc 25%,transparent 25%,transparent 75%,#ccc 75%);background-size:8px 8px;background-position:0 0,4px 4px;"></div>
<svg style="left:7px;top:232.9px" width="16" height="10" viewBox="0 0 16 10"><path d="M0.500 5c3-5.500 12-5.500 15 0c-3 5.500-12 5.500-15 0z" fill="#dcdcdc"/><circle cx="8" cy="5" r="2.800" fill="#535353"/><circle cx="8" cy="5" r="1.400" fill="#dcdcdc"/></svg>
<div class="t" style="left:69px;top:229.9px;font-size:11.500px;color:#e8e8e8">家具</div>
</div>
<svg style="left:1566px;top:693px" width="26" height="250" viewBox="0 0 26 250" fill="none">
<path d="M6 8h15v20h-15zM6 14h15M11 14v14M8 5h10" stroke="#bdbdbd" stroke-width="0.600"/>
<circle cx="6" cy="46" r="1.600" fill="#6f8a4f"/>
<circle cx="21" cy="82" r="1.600" fill="#6f8a4f"/>
<path d="M7 118h3M14 121h2M9 128v3M16 131h4" stroke="#333" stroke-width="0.800"/>
<path d="M8 154h2v2h-2zM15 156h2v2h-2zM8 163h2v2h-2zM12 168h5M8 172v3M17 160v3" stroke="#111" stroke-width="1"/>
<path d="M6 190h15v22h-15zM6 198h9M12 198v14M9 203h2" stroke="#111" stroke-width="1"/>
<path d="M8 228h4M14 232h5M9 238h3" stroke="#c4c4c4" stroke-width="0.800"/>
</svg>
<div class="a" style="left:1561px;top:693px;width:1px;height:248px;background:#474747"></div>
<div class="a" style="left:1748px;top:693px;width:14px;height:248px;background:#4b4b4b"></div>
<div class="a" style="left:1750px;top:710px;width:10px;height:131px;background:#696969"></div>
<svg style="left:1748px;top:693px" width="14" height="248" fill="none"><path d="M3.500 12l3.500-3.500 3.500 3.500" stroke="#7e7e7e" stroke-width="1.200"/><path d="M3.500 236.500l3.500 3.500 3.500-3.500" stroke="#8e8e8e" stroke-width="1.200"/></svg>
<div class="a" style="left:1533px;top:941px;width:229px;height:24px;background:#535353"></div>
<svg style="left:1533px;top:941px" width="229" height="24" viewBox="1533 941 229 24" fill="none" stroke="#dcdcdc" stroke-width="1.300">
<path d="M1575 951h-2a2.500 2.500 0 0 0 0 5h2M1581 951h2a2.500 2.500 0 0 1 0 5h-2M1575 953.500h6" stroke="#7a7a7a"/>
<rect x="1622.500" y="948.500" width="12" height="10" fill="#dcdcdc"/><circle cx="1628.500" cy="953.500" r="3" fill="#535353" stroke="none"/>
<circle cx="1654" cy="953.500" r="5"/><path d="M1650.500 957l7-7a5 5 0 0 1-7 7z" fill="#dcdcdc" stroke="none"/>
<path d="M1673 949h4.500l1.500 1.500h6.500v8h-12.500z" fill="#dcdcdc" stroke="none"/>
<path d="M1698.500 948.500h11v7l-3.500 3.500h-7.500zM1709.500 955.500h-3.500v3.500" />
<path d="M1724.500 950.500h10M1727.500 950v-1.500h4v1.500M1725.500 951l.5 8h7l.5-8M1728 952.500v5M1731 952.500v5" stroke-width="1.100"/>
<path d="M1608 962l2 2-2 0zM1661 962l2 2-2 0z" fill="#dcdcdc" stroke="none"/>
</svg>
<div class="t" style="left:1596px;top:944px;font-family:'Liberation Serif',serif;font-style:italic;font-weight:bold;font-size:14px;color:#e2e2e2">fx</div>

<div class="t" style="left:1515px;top:768px;font-size:74px;line-height:100px;height:100px;color:#ffffff;font-weight:400;letter-spacing:1px;-webkit-text-stroke:1.800px #fff;stroke-linejoin:round;stroke-linecap:round;font-family:'Noto Sans CJK SC',sans-serif">欧模网</div>
<div class="t" style="left:1516px;top:862px;font-size:52px;line-height:54px;height:54px;color:#ffffff;transform-origin:0 0;-webkit-text-stroke:0.600px #fff;stroke-linejoin:round;transform:scaleX(0.833)">ID:3478435</div>
<div class="t wmk" style="left:164px;top:87px;font-size:37px;letter-spacing:5px;font-family:'Noto Sans CJK SC',sans-serif">欧模网</div>
<div class="t wmk" style="left:1064px;top:87px;font-size:37px;letter-spacing:5px;font-family:'Noto Sans CJK SC',sans-serif">欧模网</div>
<div class="t wmk" style="left:602px;top:85px;font-size:26.500px;font-weight:bold">www.om.cn</div>
<div class="t wmk" style="left:1502px;top:85px;font-size:26.500px;font-weight:bold">www.om.cn</div>
<div class="t wmk" style="left:389px;top:311px;font-size:37px;letter-spacing:5px;font-family:'Noto Sans CJK SC',sans-serif">欧模网</div>
<div class="t wmk" style="left:1289px;top:311px;font-size:37px;letter-spacing:5px;font-family:'Noto Sans CJK SC',sans-serif">欧模网</div>
<div class="t wmk" style="left:-75px;top:309px;font-size:26.500px;font-weight:bold">www.om.cn</div>
<div class="t wmk" style="left:825px;top:309px;font-size:26.500px;font-weight:bold">www.om.cn</div>
<div class="t wmk" style="left:1725px;top:309px;font-size:26.500px;font-weight:bold">www.om.cn</div>
<div class="t wmk" style="left:164px;top:535px;font-size:37px;letter-spacing:5px;font-family:'Noto Sans CJK SC',sans-serif">欧模网</div>
<div class="t wmk" style="left:1064px;top:535px;font-size:37px;letter-spacing:5px;font-family:'Noto Sans CJK SC',sans-serif">欧模网</div>
<div class="t wmk" style="left:602px;top:533px;font-size:26.500px;font-weight:bold">www.om.cn</div>
<div class="t wmk" style="left:1502px;top:533px;font-size:26.500px;font-weight:bold">www.om.cn</div>
<div class="t wmk" style="left:389px;top:759px;font-size:37px;letter-spacing:5px;font-family:'Noto Sans CJK SC',sans-serif">欧模网</div>
<div class="t wmk" style="left:1289px;top:759px;font-size:37px;letter-spacing:5px;font-family:'Noto Sans CJK SC',sans-serif">欧模网</div>
<div class="t wmk" style="left:-75px;top:757px;font-size:26.500px;font-weight:bold">www.om.cn</div>
<div class="t wmk" style="left:825px;top:757px;font-size:26.500px;font-weight:bold">www.om.cn</div>
<div class="t wmk" style="left:1725px;top:757px;font-size:26.500px;font-weight:bold">www.om.cn</div>
</div>
</body>
</html>
